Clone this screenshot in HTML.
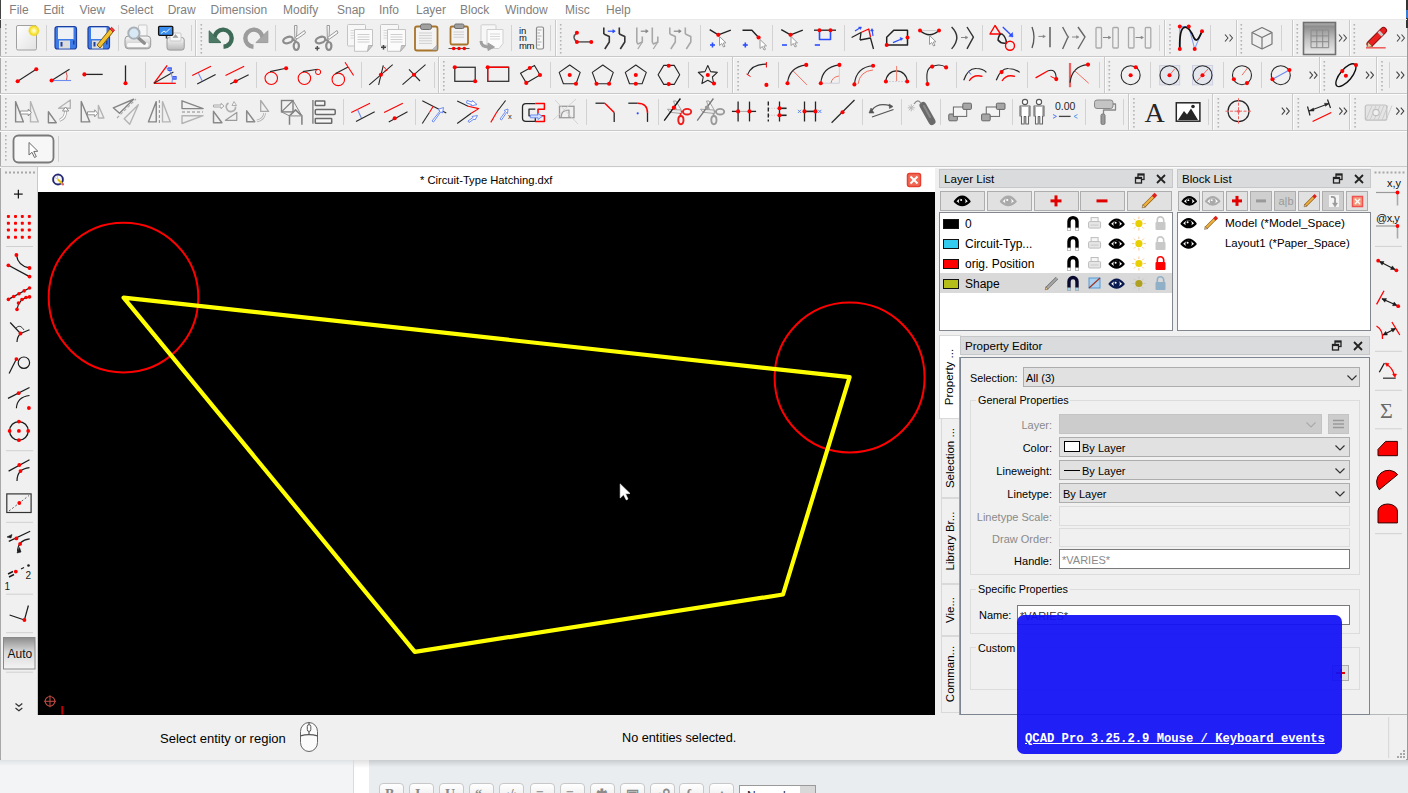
<!DOCTYPE html><html><head><meta charset="utf-8"><style>
*{box-sizing:border-box;margin:0;padding:0}
html,body{width:1408px;height:793px;overflow:hidden;background:#e9edf0;font-family:"Liberation Sans",sans-serif;position:relative}
.a{position:absolute}
.t{position:absolute;white-space:nowrap;line-height:1}
svg{position:absolute;overflow:visible}
</style></head><body>

<div class="a" style="left:0px;top:760px;width:353px;height:33px;background:linear-gradient(#dfe2e5,#f2f4f6 6px)"></div>
<div class="a" style="left:353px;top:760px;width:1px;height:33px;background:#d9dcdf"></div>
<div class="a" style="left:354px;top:760px;width:15px;height:33px;background:linear-gradient(#e0e0e0,#ffffff 8px)"></div>
<div class="a" style="left:369px;top:760px;width:1039px;height:33px;background:linear-gradient(#c9cccf,#e9edf0 7px)"></div>
<div class="a" style="left:379px;top:783px;width:25px;height:14px;background:linear-gradient(#fff,#f0f0f0);border:1px solid #c8c8c8;border-radius:4px"></div>
<div class="t" style="left:385px;top:788px;font-size:14px;color:#8a8a8a;font-family:'Liberation Serif',serif;font-weight:bold">B</div>
<div class="a" style="left:409px;top:783px;width:25px;height:14px;background:linear-gradient(#fff,#f0f0f0);border:1px solid #c8c8c8;border-radius:4px"></div>
<div class="t" style="left:415px;top:788px;font-size:14px;color:#8a8a8a;font-family:'Liberation Serif',serif;font-weight:bold">I</div>
<div class="a" style="left:439px;top:783px;width:25px;height:14px;background:linear-gradient(#fff,#f0f0f0);border:1px solid #c8c8c8;border-radius:4px"></div>
<div class="t" style="left:445px;top:788px;font-size:14px;color:#8a8a8a;font-family:'Liberation Serif',serif;font-weight:bold">U</div>
<div class="a" style="left:469px;top:783px;width:25px;height:14px;background:linear-gradient(#fff,#f0f0f0);border:1px solid #c8c8c8;border-radius:4px"></div>
<div class="t" style="left:475px;top:788px;font-size:14px;color:#8a8a8a;font-family:'Liberation Serif',serif;font-weight:bold">&#8220;</div>
<div class="a" style="left:499px;top:783px;width:25px;height:14px;background:linear-gradient(#fff,#f0f0f0);border:1px solid #c8c8c8;border-radius:4px"></div>
<div class="t" style="left:505px;top:788px;font-size:14px;color:#8a8a8a;font-family:'Liberation Serif',serif;font-weight:bold">&#8249;/&#8250;</div>
<div class="a" style="left:530px;top:783px;width:25px;height:14px;background:linear-gradient(#fff,#f0f0f0);border:1px solid #c8c8c8;border-radius:4px"></div>
<div class="t" style="left:536px;top:788px;font-size:14px;color:#8a8a8a;font-family:'Liberation Serif',serif;font-weight:bold">&#8801;</div>
<div class="a" style="left:560px;top:783px;width:25px;height:14px;background:linear-gradient(#fff,#f0f0f0);border:1px solid #c8c8c8;border-radius:4px"></div>
<div class="t" style="left:566px;top:788px;font-size:14px;color:#8a8a8a;font-family:'Liberation Serif',serif;font-weight:bold">&#8801;</div>
<div class="a" style="left:590px;top:783px;width:25px;height:14px;background:linear-gradient(#fff,#f0f0f0);border:1px solid #c8c8c8;border-radius:4px"></div>
<div class="t" style="left:596px;top:788px;font-size:14px;color:#8a8a8a;font-family:'Liberation Serif',serif;font-weight:bold">&#10033;</div>
<div class="a" style="left:620px;top:783px;width:25px;height:14px;background:linear-gradient(#fff,#f0f0f0);border:1px solid #c8c8c8;border-radius:4px"></div>
<div class="t" style="left:626px;top:788px;font-size:14px;color:#8a8a8a;font-family:'Liberation Serif',serif;font-weight:bold">&#9635;</div>
<div class="a" style="left:650px;top:783px;width:25px;height:14px;background:linear-gradient(#fff,#f0f0f0);border:1px solid #c8c8c8;border-radius:4px"></div>
<div class="t" style="left:656px;top:788px;font-size:14px;color:#8a8a8a;font-family:'Liberation Serif',serif;font-weight:bold">&#9741;</div>
<div class="a" style="left:679px;top:783px;width:25px;height:14px;background:linear-gradient(#fff,#f0f0f0);border:1px solid #c8c8c8;border-radius:4px"></div>
<div class="t" style="left:685px;top:788px;font-size:14px;color:#8a8a8a;font-family:'Liberation Serif',serif;font-weight:bold">&#402;</div>
<div class="a" style="left:709px;top:783px;width:25px;height:14px;background:linear-gradient(#fff,#f0f0f0);border:1px solid #c8c8c8;border-radius:4px"></div>
<div class="t" style="left:715px;top:788px;font-size:14px;color:#8a8a8a;font-family:'Liberation Serif',serif;font-weight:bold">&#9650;</div>
<div class="a" style="left:739px;top:785px;width:77px;height:14px;background:#fff;border:1px solid #9a9a9a"></div>
<div class="a" style="left:800px;top:786px;width:15px;height:13px;background:#d8d8d8"></div>
<div class="t" style="left:747px;top:790px;font-size:12px;color:#222;">Normal</div>
<div class="a" style="left:545px;top:759px;width:335px;height:1px;background:#8a8a8a"></div>
<div class="a" style="left:0px;top:0px;width:1408px;height:760px;background:#f0f0f0;border-right:1px solid #9a9a9a;border-bottom:1px solid #9a9a9a;border-left:1px solid #a8a8a8"></div>
<div class="a" style="left:0px;top:0px;width:1406px;height:20px;background:#fff"></div>
<div class="a" style="left:1406px;top:0px;width:2px;height:28px;background:#333"></div>
<div class="a" style="left:0px;top:0px;width:1px;height:28px;background:#444"></div>
<div class="a" style="left:1406px;top:10px;width:2px;height:8px;background:#3a7ad0"></div>
<div class="a" style="left:0px;top:19px;width:1407px;height:1px;background:#e8e8e8"></div>
<div class="t" style="left:9.3px;top:4px;font-size:12px;color:#808080;">File</div>
<div class="t" style="left:43.4px;top:4px;font-size:12px;color:#808080;">Edit</div>
<div class="t" style="left:79.4px;top:4px;font-size:12px;color:#808080;">View</div>
<div class="t" style="left:120px;top:4px;font-size:12px;color:#808080;">Select</div>
<div class="t" style="left:167.7px;top:4px;font-size:12px;color:#808080;">Draw</div>
<div class="t" style="left:210.5px;top:4px;font-size:12px;color:#808080;">Dimension</div>
<div class="t" style="left:283px;top:4px;font-size:12px;color:#808080;">Modify</div>
<div class="t" style="left:337px;top:4px;font-size:12px;color:#808080;">Snap</div>
<div class="t" style="left:379px;top:4px;font-size:12px;color:#808080;">Info</div>
<div class="t" style="left:416px;top:4px;font-size:12px;color:#808080;">Layer</div>
<div class="t" style="left:460px;top:4px;font-size:12px;color:#808080;">Block</div>
<div class="t" style="left:505px;top:4px;font-size:12px;color:#808080;">Window</div>
<div class="t" style="left:565px;top:4px;font-size:12px;color:#808080;">Misc</div>
<div class="t" style="left:606px;top:4px;font-size:12px;color:#808080;">Help</div>
<div class="a" style="left:0px;top:56px;width:1407px;height:1px;background:#c9c9c9"></div>
<div class="a" style="left:0px;top:57px;width:1407px;height:1px;background:#fbfbfb"></div>
<div class="a" style="left:0px;top:93px;width:1407px;height:1px;background:#c9c9c9"></div>
<div class="a" style="left:0px;top:94px;width:1407px;height:1px;background:#fbfbfb"></div>
<div class="a" style="left:0px;top:130px;width:1407px;height:1px;background:#c9c9c9"></div>
<div class="a" style="left:0px;top:131px;width:1407px;height:1px;background:#fbfbfb"></div>
<div class="a" style="left:0px;top:166px;width:1407px;height:1px;background:#c9c9c9"></div>
<div class="a" style="left:0px;top:167px;width:1407px;height:1px;background:#fbfbfb"></div>
<svg style="left:0;top:0" width="1408" height="793">
<defs>
<linearGradient id="gpage" x1="0" y1="0" x2="1" y2="1"><stop offset="0" stop-color="#ffffff"/><stop offset="1" stop-color="#e2e2e2"/></linearGradient>
<linearGradient id="gprint" x1="0" y1="0" x2="0" y2="1"><stop offset="0" stop-color="#fafafa"/><stop offset="1" stop-color="#b9b9b9"/></linearGradient>
<linearGradient id="ggrid" x1="0" y1="0" x2="0" y2="1"><stop offset="0" stop-color="#b8b8b8"/><stop offset="0.12" stop-color="#8e8e8e"/><stop offset="0.55" stop-color="#c4c4c4"/><stop offset="1" stop-color="#ececec"/></linearGradient>
<radialGradient id="gglow"><stop offset="0" stop-color="#ffffff"/><stop offset="0.35" stop-color="#fff27a"/><stop offset="0.75" stop-color="#f0d820"/><stop offset="1" stop-color="#f0d820" stop-opacity="0"/></radialGradient>
</defs>
<rect x="5.0" y="24" width="1.6" height="1.6" fill="#b4b4b4"/>
<rect x="5.0" y="28" width="1.6" height="1.6" fill="#b4b4b4"/>
<rect x="5.0" y="32" width="1.6" height="1.6" fill="#b4b4b4"/>
<rect x="5.0" y="36" width="1.6" height="1.6" fill="#b4b4b4"/>
<rect x="5.0" y="40" width="1.6" height="1.6" fill="#b4b4b4"/>
<rect x="5.0" y="44" width="1.6" height="1.6" fill="#b4b4b4"/>
<rect x="5.0" y="48" width="1.6" height="1.6" fill="#b4b4b4"/>
<rect x="5.0" y="52" width="1.6" height="1.6" fill="#b4b4b4"/>
<rect x="200.5" y="24" width="1.6" height="1.6" fill="#b4b4b4"/>
<rect x="200.5" y="28" width="1.6" height="1.6" fill="#b4b4b4"/>
<rect x="200.5" y="32" width="1.6" height="1.6" fill="#b4b4b4"/>
<rect x="200.5" y="36" width="1.6" height="1.6" fill="#b4b4b4"/>
<rect x="200.5" y="40" width="1.6" height="1.6" fill="#b4b4b4"/>
<rect x="200.5" y="44" width="1.6" height="1.6" fill="#b4b4b4"/>
<rect x="200.5" y="48" width="1.6" height="1.6" fill="#b4b4b4"/>
<rect x="200.5" y="52" width="1.6" height="1.6" fill="#b4b4b4"/>
<rect x="559.9" y="24" width="1.6" height="1.6" fill="#b4b4b4"/>
<rect x="559.9" y="28" width="1.6" height="1.6" fill="#b4b4b4"/>
<rect x="559.9" y="32" width="1.6" height="1.6" fill="#b4b4b4"/>
<rect x="559.9" y="36" width="1.6" height="1.6" fill="#b4b4b4"/>
<rect x="559.9" y="40" width="1.6" height="1.6" fill="#b4b4b4"/>
<rect x="559.9" y="44" width="1.6" height="1.6" fill="#b4b4b4"/>
<rect x="559.9" y="48" width="1.6" height="1.6" fill="#b4b4b4"/>
<rect x="559.9" y="52" width="1.6" height="1.6" fill="#b4b4b4"/>
<rect x="1169.2" y="24" width="1.6" height="1.6" fill="#b4b4b4"/>
<rect x="1169.2" y="28" width="1.6" height="1.6" fill="#b4b4b4"/>
<rect x="1169.2" y="32" width="1.6" height="1.6" fill="#b4b4b4"/>
<rect x="1169.2" y="36" width="1.6" height="1.6" fill="#b4b4b4"/>
<rect x="1169.2" y="40" width="1.6" height="1.6" fill="#b4b4b4"/>
<rect x="1169.2" y="44" width="1.6" height="1.6" fill="#b4b4b4"/>
<rect x="1169.2" y="48" width="1.6" height="1.6" fill="#b4b4b4"/>
<rect x="1169.2" y="52" width="1.6" height="1.6" fill="#b4b4b4"/>
<rect x="1240.5" y="24" width="1.6" height="1.6" fill="#b4b4b4"/>
<rect x="1240.5" y="28" width="1.6" height="1.6" fill="#b4b4b4"/>
<rect x="1240.5" y="32" width="1.6" height="1.6" fill="#b4b4b4"/>
<rect x="1240.5" y="36" width="1.6" height="1.6" fill="#b4b4b4"/>
<rect x="1240.5" y="40" width="1.6" height="1.6" fill="#b4b4b4"/>
<rect x="1240.5" y="44" width="1.6" height="1.6" fill="#b4b4b4"/>
<rect x="1240.5" y="48" width="1.6" height="1.6" fill="#b4b4b4"/>
<rect x="1240.5" y="52" width="1.6" height="1.6" fill="#b4b4b4"/>
<rect x="1296.5" y="24" width="1.6" height="1.6" fill="#b4b4b4"/>
<rect x="1296.5" y="28" width="1.6" height="1.6" fill="#b4b4b4"/>
<rect x="1296.5" y="32" width="1.6" height="1.6" fill="#b4b4b4"/>
<rect x="1296.5" y="36" width="1.6" height="1.6" fill="#b4b4b4"/>
<rect x="1296.5" y="40" width="1.6" height="1.6" fill="#b4b4b4"/>
<rect x="1296.5" y="44" width="1.6" height="1.6" fill="#b4b4b4"/>
<rect x="1296.5" y="48" width="1.6" height="1.6" fill="#b4b4b4"/>
<rect x="1296.5" y="52" width="1.6" height="1.6" fill="#b4b4b4"/>
<rect x="1353.5" y="24" width="1.6" height="1.6" fill="#b4b4b4"/>
<rect x="1353.5" y="28" width="1.6" height="1.6" fill="#b4b4b4"/>
<rect x="1353.5" y="32" width="1.6" height="1.6" fill="#b4b4b4"/>
<rect x="1353.5" y="36" width="1.6" height="1.6" fill="#b4b4b4"/>
<rect x="1353.5" y="40" width="1.6" height="1.6" fill="#b4b4b4"/>
<rect x="1353.5" y="44" width="1.6" height="1.6" fill="#b4b4b4"/>
<rect x="1353.5" y="48" width="1.6" height="1.6" fill="#b4b4b4"/>
<rect x="1353.5" y="52" width="1.6" height="1.6" fill="#b4b4b4"/>
<rect x="5.0" y="61" width="1.6" height="1.6" fill="#b4b4b4"/>
<rect x="5.0" y="65" width="1.6" height="1.6" fill="#b4b4b4"/>
<rect x="5.0" y="69" width="1.6" height="1.6" fill="#b4b4b4"/>
<rect x="5.0" y="73" width="1.6" height="1.6" fill="#b4b4b4"/>
<rect x="5.0" y="77" width="1.6" height="1.6" fill="#b4b4b4"/>
<rect x="5.0" y="81" width="1.6" height="1.6" fill="#b4b4b4"/>
<rect x="5.0" y="85" width="1.6" height="1.6" fill="#b4b4b4"/>
<rect x="5.0" y="89" width="1.6" height="1.6" fill="#b4b4b4"/>
<rect x="443.0" y="61" width="1.6" height="1.6" fill="#b4b4b4"/>
<rect x="443.0" y="65" width="1.6" height="1.6" fill="#b4b4b4"/>
<rect x="443.0" y="69" width="1.6" height="1.6" fill="#b4b4b4"/>
<rect x="443.0" y="73" width="1.6" height="1.6" fill="#b4b4b4"/>
<rect x="443.0" y="77" width="1.6" height="1.6" fill="#b4b4b4"/>
<rect x="443.0" y="81" width="1.6" height="1.6" fill="#b4b4b4"/>
<rect x="443.0" y="85" width="1.6" height="1.6" fill="#b4b4b4"/>
<rect x="443.0" y="89" width="1.6" height="1.6" fill="#b4b4b4"/>
<rect x="737.3" y="61" width="1.6" height="1.6" fill="#b4b4b4"/>
<rect x="737.3" y="65" width="1.6" height="1.6" fill="#b4b4b4"/>
<rect x="737.3" y="69" width="1.6" height="1.6" fill="#b4b4b4"/>
<rect x="737.3" y="73" width="1.6" height="1.6" fill="#b4b4b4"/>
<rect x="737.3" y="77" width="1.6" height="1.6" fill="#b4b4b4"/>
<rect x="737.3" y="81" width="1.6" height="1.6" fill="#b4b4b4"/>
<rect x="737.3" y="85" width="1.6" height="1.6" fill="#b4b4b4"/>
<rect x="737.3" y="89" width="1.6" height="1.6" fill="#b4b4b4"/>
<rect x="1108.5" y="61" width="1.6" height="1.6" fill="#b4b4b4"/>
<rect x="1108.5" y="65" width="1.6" height="1.6" fill="#b4b4b4"/>
<rect x="1108.5" y="69" width="1.6" height="1.6" fill="#b4b4b4"/>
<rect x="1108.5" y="73" width="1.6" height="1.6" fill="#b4b4b4"/>
<rect x="1108.5" y="77" width="1.6" height="1.6" fill="#b4b4b4"/>
<rect x="1108.5" y="81" width="1.6" height="1.6" fill="#b4b4b4"/>
<rect x="1108.5" y="85" width="1.6" height="1.6" fill="#b4b4b4"/>
<rect x="1108.5" y="89" width="1.6" height="1.6" fill="#b4b4b4"/>
<rect x="1323.5" y="61" width="1.6" height="1.6" fill="#b4b4b4"/>
<rect x="1323.5" y="65" width="1.6" height="1.6" fill="#b4b4b4"/>
<rect x="1323.5" y="69" width="1.6" height="1.6" fill="#b4b4b4"/>
<rect x="1323.5" y="73" width="1.6" height="1.6" fill="#b4b4b4"/>
<rect x="1323.5" y="77" width="1.6" height="1.6" fill="#b4b4b4"/>
<rect x="1323.5" y="81" width="1.6" height="1.6" fill="#b4b4b4"/>
<rect x="1323.5" y="85" width="1.6" height="1.6" fill="#b4b4b4"/>
<rect x="1323.5" y="89" width="1.6" height="1.6" fill="#b4b4b4"/>
<rect x="1381.2" y="61" width="1.6" height="1.6" fill="#b4b4b4"/>
<rect x="1381.2" y="65" width="1.6" height="1.6" fill="#b4b4b4"/>
<rect x="1381.2" y="69" width="1.6" height="1.6" fill="#b4b4b4"/>
<rect x="1381.2" y="73" width="1.6" height="1.6" fill="#b4b4b4"/>
<rect x="1381.2" y="77" width="1.6" height="1.6" fill="#b4b4b4"/>
<rect x="1381.2" y="81" width="1.6" height="1.6" fill="#b4b4b4"/>
<rect x="1381.2" y="85" width="1.6" height="1.6" fill="#b4b4b4"/>
<rect x="1381.2" y="89" width="1.6" height="1.6" fill="#b4b4b4"/>
<rect x="5.0" y="98" width="1.6" height="1.6" fill="#b4b4b4"/>
<rect x="5.0" y="102" width="1.6" height="1.6" fill="#b4b4b4"/>
<rect x="5.0" y="106" width="1.6" height="1.6" fill="#b4b4b4"/>
<rect x="5.0" y="110" width="1.6" height="1.6" fill="#b4b4b4"/>
<rect x="5.0" y="114" width="1.6" height="1.6" fill="#b4b4b4"/>
<rect x="5.0" y="118" width="1.6" height="1.6" fill="#b4b4b4"/>
<rect x="5.0" y="122" width="1.6" height="1.6" fill="#b4b4b4"/>
<rect x="5.0" y="126" width="1.6" height="1.6" fill="#b4b4b4"/>
<rect x="1133.1" y="98" width="1.6" height="1.6" fill="#b4b4b4"/>
<rect x="1133.1" y="102" width="1.6" height="1.6" fill="#b4b4b4"/>
<rect x="1133.1" y="106" width="1.6" height="1.6" fill="#b4b4b4"/>
<rect x="1133.1" y="110" width="1.6" height="1.6" fill="#b4b4b4"/>
<rect x="1133.1" y="114" width="1.6" height="1.6" fill="#b4b4b4"/>
<rect x="1133.1" y="118" width="1.6" height="1.6" fill="#b4b4b4"/>
<rect x="1133.1" y="122" width="1.6" height="1.6" fill="#b4b4b4"/>
<rect x="1133.1" y="126" width="1.6" height="1.6" fill="#b4b4b4"/>
<rect x="1217.5" y="98" width="1.6" height="1.6" fill="#b4b4b4"/>
<rect x="1217.5" y="102" width="1.6" height="1.6" fill="#b4b4b4"/>
<rect x="1217.5" y="106" width="1.6" height="1.6" fill="#b4b4b4"/>
<rect x="1217.5" y="110" width="1.6" height="1.6" fill="#b4b4b4"/>
<rect x="1217.5" y="114" width="1.6" height="1.6" fill="#b4b4b4"/>
<rect x="1217.5" y="118" width="1.6" height="1.6" fill="#b4b4b4"/>
<rect x="1217.5" y="122" width="1.6" height="1.6" fill="#b4b4b4"/>
<rect x="1217.5" y="126" width="1.6" height="1.6" fill="#b4b4b4"/>
<rect x="1297.5" y="98" width="1.6" height="1.6" fill="#b4b4b4"/>
<rect x="1297.5" y="102" width="1.6" height="1.6" fill="#b4b4b4"/>
<rect x="1297.5" y="106" width="1.6" height="1.6" fill="#b4b4b4"/>
<rect x="1297.5" y="110" width="1.6" height="1.6" fill="#b4b4b4"/>
<rect x="1297.5" y="114" width="1.6" height="1.6" fill="#b4b4b4"/>
<rect x="1297.5" y="118" width="1.6" height="1.6" fill="#b4b4b4"/>
<rect x="1297.5" y="122" width="1.6" height="1.6" fill="#b4b4b4"/>
<rect x="1297.5" y="126" width="1.6" height="1.6" fill="#b4b4b4"/>
<rect x="1354.3" y="98" width="1.6" height="1.6" fill="#b4b4b4"/>
<rect x="1354.3" y="102" width="1.6" height="1.6" fill="#b4b4b4"/>
<rect x="1354.3" y="106" width="1.6" height="1.6" fill="#b4b4b4"/>
<rect x="1354.3" y="110" width="1.6" height="1.6" fill="#b4b4b4"/>
<rect x="1354.3" y="114" width="1.6" height="1.6" fill="#b4b4b4"/>
<rect x="1354.3" y="118" width="1.6" height="1.6" fill="#b4b4b4"/>
<rect x="1354.3" y="122" width="1.6" height="1.6" fill="#b4b4b4"/>
<rect x="1354.3" y="126" width="1.6" height="1.6" fill="#b4b4b4"/>
<rect x="5.0" y="135" width="1.6" height="1.6" fill="#b4b4b4"/>
<rect x="5.0" y="139" width="1.6" height="1.6" fill="#b4b4b4"/>
<rect x="5.0" y="143" width="1.6" height="1.6" fill="#b4b4b4"/>
<rect x="5.0" y="147" width="1.6" height="1.6" fill="#b4b4b4"/>
<rect x="5.0" y="151" width="1.6" height="1.6" fill="#b4b4b4"/>
<rect x="5.0" y="155" width="1.6" height="1.6" fill="#b4b4b4"/>
<rect x="5.0" y="159" width="1.6" height="1.6" fill="#b4b4b4"/>
<rect x="195" y="20" width="1" height="36" fill="#c9c9c9"/><rect x="196" y="20" width="1" height="36" fill="#fbfbfb"/>
<rect x="555" y="20" width="1" height="36" fill="#c9c9c9"/><rect x="556" y="20" width="1" height="36" fill="#fbfbfb"/>
<rect x="1164" y="20" width="1" height="36" fill="#c9c9c9"/><rect x="1165" y="20" width="1" height="36" fill="#fbfbfb"/>
<rect x="1236" y="20" width="1" height="36" fill="#c9c9c9"/><rect x="1237" y="20" width="1" height="36" fill="#fbfbfb"/>
<rect x="1292" y="20" width="1" height="36" fill="#c9c9c9"/><rect x="1293" y="20" width="1" height="36" fill="#fbfbfb"/>
<rect x="1349" y="20" width="1" height="36" fill="#c9c9c9"/><rect x="1350" y="20" width="1" height="36" fill="#fbfbfb"/>
<rect x="438" y="57" width="1" height="36" fill="#c9c9c9"/><rect x="439" y="57" width="1" height="36" fill="#fbfbfb"/>
<rect x="732" y="57" width="1" height="36" fill="#c9c9c9"/><rect x="733" y="57" width="1" height="36" fill="#fbfbfb"/>
<rect x="1104" y="57" width="1" height="36" fill="#c9c9c9"/><rect x="1105" y="57" width="1" height="36" fill="#fbfbfb"/>
<rect x="1319" y="57" width="1" height="36" fill="#c9c9c9"/><rect x="1320" y="57" width="1" height="36" fill="#fbfbfb"/>
<rect x="1376" y="57" width="1" height="36" fill="#c9c9c9"/><rect x="1377" y="57" width="1" height="36" fill="#fbfbfb"/>
<rect x="1128" y="94" width="1" height="36" fill="#c9c9c9"/><rect x="1129" y="94" width="1" height="36" fill="#fbfbfb"/>
<rect x="1212" y="94" width="1" height="36" fill="#c9c9c9"/><rect x="1213" y="94" width="1" height="36" fill="#fbfbfb"/>
<rect x="1292" y="94" width="1" height="36" fill="#c9c9c9"/><rect x="1293" y="94" width="1" height="36" fill="#fbfbfb"/>
<rect x="1349" y="94" width="1" height="36" fill="#c9c9c9"/><rect x="1350" y="94" width="1" height="36" fill="#fbfbfb"/>
<rect x="46" y="25" width="1" height="26" fill="#d2d2d2"/>
<rect x="118" y="25" width="1" height="26" fill="#d2d2d2"/>
<rect x="191" y="25" width="1" height="26" fill="#d2d2d2"/>
<rect x="275" y="25" width="1" height="26" fill="#d2d2d2"/>
<rect x="511" y="25" width="1" height="26" fill="#d2d2d2"/>
<rect x="550" y="25" width="1" height="26" fill="#d2d2d2"/>
<rect x="700" y="25" width="1" height="26" fill="#d2d2d2"/>
<rect x="772" y="25" width="1" height="26" fill="#d2d2d2"/>
<rect x="844" y="25" width="1" height="26" fill="#d2d2d2"/>
<rect x="982" y="25" width="1" height="26" fill="#d2d2d2"/>
<rect x="1021" y="25" width="1" height="26" fill="#d2d2d2"/>
<rect x="1159" y="25" width="1" height="26" fill="#d2d2d2"/>
<rect x="1210" y="25" width="1" height="26" fill="#d2d2d2"/>
<rect x="1281" y="25" width="1" height="26" fill="#d2d2d2"/>
<rect x="145" y="62" width="1" height="26" fill="#d2d2d2"/>
<rect x="185" y="62" width="1" height="26" fill="#d2d2d2"/>
<rect x="256" y="62" width="1" height="26" fill="#d2d2d2"/>
<rect x="361" y="62" width="1" height="26" fill="#d2d2d2"/>
<rect x="434" y="62" width="1" height="26" fill="#d2d2d2"/>
<rect x="550" y="62" width="1" height="26" fill="#d2d2d2"/>
<rect x="688" y="62" width="1" height="26" fill="#d2d2d2"/>
<rect x="727" y="62" width="1" height="26" fill="#d2d2d2"/>
<rect x="778" y="62" width="1" height="26" fill="#d2d2d2"/>
<rect x="916" y="62" width="1" height="26" fill="#d2d2d2"/>
<rect x="956" y="62" width="1" height="26" fill="#d2d2d2"/>
<rect x="1027" y="62" width="1" height="26" fill="#d2d2d2"/>
<rect x="1099" y="62" width="1" height="26" fill="#d2d2d2"/>
<rect x="1150" y="62" width="1" height="26" fill="#d2d2d2"/>
<rect x="1223" y="62" width="1" height="26" fill="#d2d2d2"/>
<rect x="1261" y="62" width="1" height="26" fill="#d2d2d2"/>
<rect x="1389" y="62" width="1" height="26" fill="#d2d2d2"/>
<rect x="343" y="99" width="1" height="26" fill="#d2d2d2"/>
<rect x="415" y="99" width="1" height="26" fill="#d2d2d2"/>
<rect x="586" y="99" width="1" height="26" fill="#d2d2d2"/>
<rect x="658" y="99" width="1" height="26" fill="#d2d2d2"/>
<rect x="862" y="99" width="1" height="26" fill="#d2d2d2"/>
<rect x="901" y="99" width="1" height="26" fill="#d2d2d2"/>
<rect x="940" y="99" width="1" height="26" fill="#d2d2d2"/>
<rect x="1012" y="99" width="1" height="26" fill="#d2d2d2"/>
<rect x="1085" y="99" width="1" height="26" fill="#d2d2d2"/>
<rect x="1123" y="99" width="1" height="26" fill="#d2d2d2"/>
<rect x="1208" y="99" width="1" height="26" fill="#d2d2d2"/>
<rect x="58" y="136" width="1" height="26" fill="#d2d2d2"/>
<rect x="16.5" y="25.5" width="20" height="24.5" rx="1.5" fill="url(#gpage)" stroke="#a0a0a0" stroke-width="1" />
<circle cx="33.9" cy="30.7" r="6" fill="url(#gglow)"/>
<rect x="55.0" y="26.5" width="21.5" height="22.5" rx="2.5" fill="#3d7ce6" stroke="#1f3f9f" stroke-width="1.2" />
<rect x="58.0" y="27.5" width="15.5" height="11.5" rx="0" fill="#eef2f6" stroke="none" stroke-width="0" />
<rect x="59.0" y="40.5" width="11" height="8" rx="0" fill="#dcdcdc" stroke="none" stroke-width="0" />
<rect x="60.5" y="42" width="2" height="4.5" rx="0" fill="#1f3f9f" stroke="none" stroke-width="0" />
<rect x="73.0" y="40.5" width="1.5" height="4" rx="0" fill="#1f3f9f" stroke="none" stroke-width="0" />
<rect x="88.0" y="26.5" width="21.5" height="22.5" rx="2.5" fill="#3d7ce6" stroke="#1f3f9f" stroke-width="1.2" />
<rect x="91.0" y="27.5" width="15.5" height="11.5" rx="0" fill="#eef2f6" stroke="none" stroke-width="0" />
<rect x="92.0" y="40.5" width="11" height="8" rx="0" fill="#dcdcdc" stroke="none" stroke-width="0" />
<rect x="93.5" y="42" width="2" height="4.5" rx="0" fill="#1f3f9f" stroke="none" stroke-width="0" />
<rect x="106.0" y="40.5" width="1.5" height="4" rx="0" fill="#1f3f9f" stroke="none" stroke-width="0" />
<path d="M97 45 L110 29 L113 32 L100 48 Z" fill="#f2c230" stroke="#7a5a10" stroke-width="1" stroke-linejoin="round" />
<path d="M110 29 L111.5 27.3 L114.5 30 L113 32 Z" fill="#e84040" stroke="#d02020" stroke-width="1" stroke-linejoin="round" />
<rect x="138.5" y="25" width="8.5" height="12" rx="1" fill="#f6f6f6" stroke="#c8c8c8" stroke-width="1" />
<rect x="125" y="36" width="25.7" height="12.8" rx="3.5" fill="url(#gprint)" stroke="#9a9a9a" stroke-width="1" />
<rect x="127" y="43" width="21.5" height="4" rx="1.5" fill="#f8f8f8" stroke="none" stroke-width="0" />
<line x1="137.8" y1="37.5" x2="144.4" y2="43.3" stroke="#8e8e8e" stroke-width="3.2" stroke-linecap="round"/>
<circle cx="133.9" cy="33.2" r="5.6" fill="#d8e8f4" stroke="#a8b0b8" stroke-width="2"/>
<rect x="167" y="37.5" width="17.2" height="12.6" rx="2.5" fill="url(#gprint)" stroke="#9a9a9a" stroke-width="1" />
<rect x="170" y="33" width="11" height="8" rx="1" fill="#f8f8f8" stroke="#c8c8c8" stroke-width="1" />
<polygon points="175.5,34.5 173,37.5 178,37.5" fill="#a0a0a0" stroke="#999" stroke-width="0.5" stroke-linejoin="round" />
<line x1="166.5" y1="35.3" x2="166.5" y2="38.5" stroke="#333" stroke-width="1.5" />
<rect x="158.6" y="26.3" width="14.2" height="9" rx="1" fill="#3a8ef0" stroke="#111" stroke-width="1.3" />
<polyline points="161,33.5 164,31 166,32.5 170,28.5" fill="none" stroke="#fff" stroke-width="0.9" stroke-linejoin="round" />
<path d="M214.5 37.5 A 8.6 8.6 0 1 1 223.5 46.8" fill="none" stroke="#3e6a58" stroke-width="4.4" stroke-linejoin="round" />
<polygon points="209.2,30.8 209.2,42.6 221,42.6" fill="#4d7a66" stroke="#3e6a58" stroke-width="1" stroke-linejoin="round" />
<path d="M262.5 37.5 A 8.6 8.6 0 1 0 253.5 46.8" fill="none" stroke="#9c9c9c" stroke-width="4.4" stroke-linejoin="round" />
<polygon points="267.8,30.8 267.8,42.6 256,42.6" fill="#a8a8a8" stroke="#9c9c9c" stroke-width="1" stroke-linejoin="round" />
<polygon points="294.5,25.5 297,25.5 296.5,39 295,43" fill="#fafafa" stroke="#9a9a9a" stroke-width="1" stroke-linejoin="round" />
<polygon points="304.5,30.5 305.5,33 297,39 295,37.5" fill="#fafafa" stroke="#9a9a9a" stroke-width="1" stroke-linejoin="round" />
<ellipse cx="288" cy="40" rx="5" ry="3" transform="rotate(-20 288 40)" fill="none" stroke="#8c8c8c" stroke-width="2.2"/>
<ellipse cx="296.3" cy="46" rx="2.6" ry="4" fill="none" stroke="#8c8c8c" stroke-width="2.2"/>
<line x1="292" y1="39.2" x2="296" y2="41.5" stroke="#8c8c8c" stroke-width="2" />
<polygon points="327.0,25.5 329.5,25.5 329.0,39 327.5,43" fill="#fafafa" stroke="#9a9a9a" stroke-width="1" stroke-linejoin="round" />
<polygon points="337.0,30.5 338.0,33 329.5,39 327.5,37.5" fill="#fafafa" stroke="#9a9a9a" stroke-width="1" stroke-linejoin="round" />
<ellipse cx="320.5" cy="40" rx="5" ry="3" transform="rotate(-20 320.5 40)" fill="none" stroke="#8c8c8c" stroke-width="2.2"/>
<ellipse cx="328.8" cy="46" rx="2.6" ry="4" fill="none" stroke="#8c8c8c" stroke-width="2.2"/>
<line x1="324.5" y1="39.2" x2="328.5" y2="41.5" stroke="#8c8c8c" stroke-width="2" />
<line x1="315.0" y1="48.3" x2="319.5" y2="48.3" stroke="#555" stroke-width="1.5" />
<line x1="317.3" y1="46" x2="317.3" y2="50.6" stroke="#555" stroke-width="1.5" />
<rect x="347.5" y="24.5" width="18" height="21.5" rx="1" fill="#f7f7f7" stroke="#c4c4c4" stroke-width="1" />
<line x1="350.5" y1="30.5" x2="358.5" y2="30.5" stroke="#d8d8d8" stroke-width="1" />
<line x1="350.5" y1="33.0" x2="358.5" y2="33.0" stroke="#d8d8d8" stroke-width="1" />
<line x1="350.5" y1="35.5" x2="358.5" y2="35.5" stroke="#d8d8d8" stroke-width="1" />
<line x1="350.5" y1="38.0" x2="358.5" y2="38.0" stroke="#d8d8d8" stroke-width="1" />
<path d="M354.5 29.5 h18 v16 l-5 5.8 h-13 z" fill="#fbfbfb" stroke="#c4c4c4" stroke-width="1" stroke-linejoin="round" />
<line x1="357.5" y1="34.5" x2="369.5" y2="34.5" stroke="#cfcfcf" stroke-width="1" />
<line x1="357.5" y1="37.0" x2="369.5" y2="37.0" stroke="#cfcfcf" stroke-width="1" />
<line x1="357.5" y1="39.5" x2="369.5" y2="39.5" stroke="#cfcfcf" stroke-width="1" />
<line x1="357.5" y1="42.0" x2="369.5" y2="42.0" stroke="#cfcfcf" stroke-width="1" />
<path d="M367.5 51.3 l5 -5.8 h-4 z" fill="#c8c8c8" stroke="#aaa" stroke-width="0.8" stroke-linejoin="round" />
<rect x="380.5" y="24.5" width="18" height="21.5" rx="1" fill="#f7f7f7" stroke="#c4c4c4" stroke-width="1" />
<line x1="383.5" y1="30.5" x2="391.5" y2="30.5" stroke="#d8d8d8" stroke-width="1" />
<line x1="383.5" y1="33.0" x2="391.5" y2="33.0" stroke="#d8d8d8" stroke-width="1" />
<line x1="383.5" y1="35.5" x2="391.5" y2="35.5" stroke="#d8d8d8" stroke-width="1" />
<line x1="383.5" y1="38.0" x2="391.5" y2="38.0" stroke="#d8d8d8" stroke-width="1" />
<path d="M387.5 29.5 h18 v16 l-5 5.8 h-13 z" fill="#fbfbfb" stroke="#c4c4c4" stroke-width="1" stroke-linejoin="round" />
<line x1="390.5" y1="34.5" x2="402.5" y2="34.5" stroke="#cfcfcf" stroke-width="1" />
<line x1="390.5" y1="37.0" x2="402.5" y2="37.0" stroke="#cfcfcf" stroke-width="1" />
<line x1="390.5" y1="39.5" x2="402.5" y2="39.5" stroke="#cfcfcf" stroke-width="1" />
<line x1="390.5" y1="42.0" x2="402.5" y2="42.0" stroke="#cfcfcf" stroke-width="1" />
<path d="M400.5 51.3 l5 -5.8 h-4 z" fill="#c8c8c8" stroke="#aaa" stroke-width="0.8" stroke-linejoin="round" />
<line x1="381" y1="47.3" x2="386" y2="47.3" stroke="#444" stroke-width="1.5" />
<line x1="383.5" y1="45" x2="383.5" y2="49.6" stroke="#444" stroke-width="1.5" />
<rect x="415" y="26.5" width="22.5" height="24" rx="2" fill="#f3f3f3" stroke="#a8742a" stroke-width="1.8" />
<line x1="419" y1="33.0" x2="432" y2="33.0" stroke="#cfcfcf" stroke-width="1" />
<line x1="419" y1="35.6" x2="432" y2="35.6" stroke="#cfcfcf" stroke-width="1" />
<line x1="419" y1="38.2" x2="432" y2="38.2" stroke="#cfcfcf" stroke-width="1" />
<line x1="419" y1="40.8" x2="432" y2="40.8" stroke="#cfcfcf" stroke-width="1" />
<line x1="419" y1="43.4" x2="432" y2="43.4" stroke="#cfcfcf" stroke-width="1" />
<rect x="420.5" y="24" width="11" height="5.5" rx="2" fill="#a0a0a0" stroke="#6e6e6e" stroke-width="1" />
<path d="M432 50 l5 -5 v5 z" fill="#bbb" stroke="#999" stroke-width="0.5" stroke-linejoin="round" />
<rect x="450.5" y="26.5" width="17.5" height="18" rx="1.5" fill="#f3f3f3" stroke="#a8742a" stroke-width="1.8" />
<line x1="453.5" y1="32.0" x2="464" y2="32.0" stroke="#cfcfcf" stroke-width="1" />
<line x1="453.5" y1="34.6" x2="464" y2="34.6" stroke="#cfcfcf" stroke-width="1" />
<line x1="453.5" y1="37.2" x2="464" y2="37.2" stroke="#cfcfcf" stroke-width="1" />
<rect x="454.5" y="24" width="9.5" height="4.5" rx="1.5" fill="#a0a0a0" stroke="#6e6e6e" stroke-width="1" />
<line x1="448.5" y1="48.5" x2="469.5" y2="48.5" stroke="#555" stroke-width="1" />
<circle cx="453.7" cy="48.5" r="1.8" fill="#ff0000"/>
<circle cx="459" cy="48.5" r="1.8" fill="#ff0000"/>
<circle cx="464.3" cy="48.5" r="1.8" fill="#ff0000"/>
<rect x="481" y="24.8" width="15" height="20" rx="1" fill="#f7f7f7" stroke="#cfcfcf" stroke-width="1" />
<path d="M487 29.5 h16 v14 l-4 5 h-12 z" fill="#fbfbfb" stroke="#cfcfcf" stroke-width="1" stroke-linejoin="round" />
<line x1="490" y1="34.0" x2="500" y2="34.0" stroke="#d8d8d8" stroke-width="1" />
<line x1="490" y1="36.5" x2="500" y2="36.5" stroke="#d8d8d8" stroke-width="1" />
<line x1="490" y1="39.0" x2="500" y2="39.0" stroke="#d8d8d8" stroke-width="1" />
<path d="M481 41 q0 6 8 6" fill="none" stroke="#a0a0a0" stroke-width="3" stroke-linejoin="round" />
<polygon points="488,43 494.5,47 488,50.5" fill="#a0a0a0" stroke="#a0a0a0" stroke-width="1" stroke-linejoin="round" />
<text x="519" y="33.5" font-family="Liberation Sans" font-size="9.5" fill="#111" >in</text>
<text x="519" y="41.3" font-family="Liberation Sans" font-size="9.5" fill="#111" >m</text>
<text x="519" y="49.3" font-family="Liberation Sans" font-size="9.5" fill="#111" letter-spacing="-0.4">mm</text>
<rect x="536.5" y="27" width="7" height="22" rx="1.5" fill="#f8f8f8" stroke="#8a8a8a" stroke-width="1.2" />
<line x1="537.5" y1="30" x2="541.5" y2="30" stroke="#999" stroke-width="0.8" />
<line x1="537.5" y1="33" x2="540" y2="33" stroke="#999" stroke-width="0.8" />
<line x1="537.5" y1="36" x2="541.5" y2="36" stroke="#999" stroke-width="0.8" />
<line x1="537.5" y1="39" x2="540" y2="39" stroke="#999" stroke-width="0.8" />
<line x1="537.5" y1="42" x2="541.5" y2="42" stroke="#999" stroke-width="0.8" />
<line x1="537.5" y1="45" x2="540" y2="45" stroke="#999" stroke-width="0.8" />
<path d="M576.9 32.8 Q571 37 576.9 41.9" fill="none" stroke="#555" stroke-width="1.5" stroke-linejoin="round" />
<line x1="576.9" y1="41.9" x2="591.25" y2="41.9" stroke="#555" stroke-width="1.5" />
<circle cx="576.9" cy="32.8" r="2" fill="#ff0000"/>
<circle cx="576.9" cy="41.9" r="2" fill="#ff0000"/>
<circle cx="591.25" cy="41.9" r="2" fill="#ff0000"/>
<line x1="603.8" y1="27.5" x2="603.8" y2="34" stroke="#333" stroke-width="1.6" />
<polyline points="603.8,34 609.3,36.5 609.3,42 604.8,49" fill="none" stroke="#333" stroke-width="1.6" stroke-linejoin="round" />
<line x1="619.3" y1="27.5" x2="619.3" y2="34" stroke="#333" stroke-width="1.6" />
<polyline points="619.3,34 624.8,36.5 624.8,42 620.3,49" fill="none" stroke="#333" stroke-width="1.6" stroke-linejoin="round" />
<line x1="607.8" y1="31.2" x2="614.8" y2="31.2" stroke="#2a4dff" stroke-width="1.2" />
<polygon points="615.3,31.2 612.8,29.5 612.8,33" fill="#2a4dff" stroke="#2a4dff" stroke-width="0.5" stroke-linejoin="round" />
<line x1="636.8" y1="27.5" x2="636.8" y2="34" stroke="#a8a8a8" stroke-width="1.6" />
<polyline points="636.8,34 636.8,42 637.8,44 642.3,42 642.3,36.5" fill="none" stroke="#a8a8a8" stroke-width="1.6" stroke-linejoin="round" />
<line x1="642.3" y1="42" x2="637.8" y2="49" stroke="#a8a8a8" stroke-width="1.3" />
<line x1="652.3" y1="27.5" x2="652.3" y2="34" stroke="#a8a8a8" stroke-width="1.6" />
<polyline points="652.3,34 652.3,42 653.3,44 657.8,42 657.8,36.5" fill="none" stroke="#a8a8a8" stroke-width="1.6" stroke-linejoin="round" />
<line x1="657.8" y1="42" x2="653.3" y2="49" stroke="#a8a8a8" stroke-width="1.3" />
<line x1="640.8" y1="31.2" x2="647.8" y2="31.2" stroke="#888" stroke-width="1.2" />
<polygon points="648.3,31.2 645.8,29.5 645.8,33" fill="#888" stroke="#888" stroke-width="0.5" stroke-linejoin="round" />
<line x1="669.8" y1="27.5" x2="669.8" y2="34" stroke="#a8a8a8" stroke-width="1.6" />
<polyline points="669.8,34 675.3,36.5 675.3,42 670.8,49" fill="none" stroke="#a8a8a8" stroke-width="1.6" stroke-linejoin="round" />
<line x1="685.3" y1="27.5" x2="685.3" y2="34" stroke="#a8a8a8" stroke-width="1.6" />
<polyline points="685.3,34 690.8,36.5 690.8,42 686.3,49" fill="none" stroke="#a8a8a8" stroke-width="1.6" stroke-linejoin="round" />
<line x1="673.8" y1="31.2" x2="680.8" y2="31.2" stroke="#888" stroke-width="1.2" />
<polygon points="681.3,31.2 678.8,29.5 678.8,33" fill="#888" stroke="#888" stroke-width="0.5" stroke-linejoin="round" />
<polyline points="709.7,29.7 718.3,34.8 730.8,30.2" fill="none" stroke="#222" stroke-width="1.4" stroke-linejoin="round" />
<circle cx="718.3" cy="34.8" r="2.1" fill="#ff0000"/>
<line x1="710" y1="45" x2="715" y2="45" stroke="#2a4dff" stroke-width="1.6" />
<line x1="712.5" y1="42.5" x2="712.5" y2="47.5" stroke="#2a4dff" stroke-width="1.6" />
<polygon points="719.5,36.5 719.5,45.5 721.8,43.5 723.5,47.0 725.0,46.3 723.3,43.0 726.0,42.8" fill="#fff" stroke="#9a9a9a" stroke-width="1" stroke-linejoin="round" />
<polyline points="742.5,30.2 751.9,30.2 758.6,37.5" fill="none" stroke="#222" stroke-width="1.4" stroke-linejoin="round" />
<circle cx="758.6" cy="37.5" r="2.1" fill="#ff0000"/>
<line x1="742.8" y1="45" x2="747.8" y2="45" stroke="#2a4dff" stroke-width="1.6" />
<line x1="745.3" y1="42.5" x2="745.3" y2="47.5" stroke="#2a4dff" stroke-width="1.6" />
<polygon points="760,39.5 760,48.5 762.3,46.5 764,50.0 765.5,49.3 763.8,46.0 766.5,45.8" fill="#fff" stroke="#9a9a9a" stroke-width="1" stroke-linejoin="round" />
<polyline points="781.25,29.7 790.6,34.8 802.8,30.2" fill="none" stroke="#222" stroke-width="1.4" stroke-linejoin="round" />
<circle cx="790.6" cy="34.8" r="2.1" fill="#ff0000"/>
<line x1="782" y1="45" x2="787" y2="45" stroke="#2a4dff" stroke-width="1.6" />
<polygon points="791,36.5 791,45.5 793.3,43.5 795,47.0 796.5,46.3 794.8,43.0 797.5,42.8" fill="#fff" stroke="#9a9a9a" stroke-width="1" stroke-linejoin="round" />
<line x1="814" y1="30.2" x2="836" y2="30.2" stroke="#222" stroke-width="1.3" />
<polyline points="819.5,30.2 819.5,39.5 830.5,39.5 830.5,30.2" fill="none" stroke="#2a4dff" stroke-width="1.6" stroke-linejoin="round" />
<circle cx="819.5" cy="30.2" r="2" fill="#ff0000"/>
<circle cx="830.5" cy="30.2" r="2" fill="#ff0000"/>
<line x1="814.8" y1="45" x2="820" y2="45" stroke="#2a4dff" stroke-width="1.6" />
<polyline points="851.6,37.5 861,32.5" fill="none" stroke="#222" stroke-width="1.3" stroke-linejoin="round" />
<polyline points="861,32.5 868.75,29 870.5,37" fill="none" stroke="#ff0000" stroke-width="1.3" stroke-linejoin="round" />
<polyline points="860,40 870.5,38 873.5,49" fill="none" stroke="#222" stroke-width="1.3" stroke-linejoin="round" />
<line x1="861" y1="32.5" x2="860" y2="40" stroke="#222" stroke-width="1.3" />
<line x1="855" y1="31" x2="860.5" y2="27.5" stroke="#2a4dff" stroke-width="1.2" />
<polygon points="861.5,27 858.5,27 860.5,29.5" fill="#2a4dff" stroke="#2a4dff" stroke-width="0.5" stroke-linejoin="round" />
<line x1="873" y1="36" x2="872" y2="29.5" stroke="#2a4dff" stroke-width="1.2" />
<polygon points="872,28.5 870.5,31 873.5,31" fill="#2a4dff" stroke="#2a4dff" stroke-width="0.5" stroke-linejoin="round" />
<polygon points="886.7,45 886.7,37.2 893.75,30.2 907.5,30.2 907.5,45" fill="none" stroke="#222" stroke-width="1.5" stroke-linejoin="round" />
<circle cx="886.7" cy="45" r="2" fill="#ff0000"/>
<circle cx="907.5" cy="37.5" r="2" fill="#ff0000"/>
<line x1="893" y1="42.6" x2="901.5" y2="39" stroke="#2a4dff" stroke-width="1.2" />
<polygon points="903,38.5 900,37.5 901,40.5" fill="#2a4dff" stroke="#2a4dff" stroke-width="0.5" stroke-linejoin="round" />
<path d="M920 30.6 Q929.5 39 939 30.6" fill="none" stroke="#222" stroke-width="1.4" stroke-linejoin="round" />
<line x1="920" y1="30.6" x2="939" y2="30.6" stroke="#bbb" stroke-width="0.8" />
<circle cx="920" cy="30.6" r="2" fill="#ff0000"/>
<circle cx="939" cy="30.6" r="2" fill="#ff0000"/>
<polygon points="929.5,35.5 929.5,44.5 931.8,42.5 933.5,46.0 935.0,45.3 933.3,42.0 936.0,41.8" fill="#fff" stroke="#9a9a9a" stroke-width="1" stroke-linejoin="round" />
<path d="M951.6 27 Q962 37.2 951.6 48.9" fill="none" stroke="#333" stroke-width="1.4" stroke-linejoin="round" />
<line x1="961" y1="37.5" x2="967" y2="37.5" stroke="#888" stroke-width="1" />
<polygon points="968,37.5 965.5,36 965.5,39" fill="#888" stroke="#888" stroke-width="0.5" stroke-linejoin="round" />
<polyline points="967,27 973.4,37.2 967,48.9" fill="none" stroke="#333" stroke-width="1.4" stroke-linejoin="round" />
<polygon points="995,25.5 1000.5,34 990,34" fill="none" stroke="#ff0000" stroke-width="1.4" stroke-linejoin="round" />
<path d="M998 40 Q999 33.5 1002 34 Q1006 37 1006.5 43 Q1001 44 998 40 Z" fill="none" stroke="#222" stroke-width="1.5" stroke-linejoin="round" />
<circle cx="1010" cy="45.8" r="4.5" fill="none" stroke="#ff0000" stroke-width="1.4"/>
<line x1="1002.8" y1="27" x2="1011" y2="35" stroke="#2a4dff" stroke-width="1.3" />
<polygon points="1013,37 1012.5,32.5 1008.8,36.3" fill="#2a4dff" stroke="#2a4dff" stroke-width="0.5" stroke-linejoin="round" />
<path d="M1032 27 Q1036 37 1032 48" fill="none" stroke="#555" stroke-width="1.3" stroke-linejoin="round" />
<line x1="1038.4" y1="36.4" x2="1044" y2="36.4" stroke="#888" stroke-width="1" />
<polygon points="1045.5,36.4 1043,35 1043,37.8" fill="#888" stroke="#888" stroke-width="0.5" stroke-linejoin="round" />
<line x1="1050" y1="27" x2="1050" y2="47.3" stroke="#555" stroke-width="1.4" />
<polyline points="1062.6,27 1068,37 1062.6,49" fill="none" stroke="#666" stroke-width="1.4" stroke-linejoin="round" />
<line x1="1072" y1="37" x2="1077.5" y2="37" stroke="#888" stroke-width="1" />
<polygon points="1079,37 1076.5,35.6 1076.5,38.4" fill="#888" stroke="#888" stroke-width="0.5" stroke-linejoin="round" />
<polyline points="1078,27 1085,37 1078,49" fill="none" stroke="#666" stroke-width="1.4" stroke-linejoin="round" />
<circle cx="1068" cy="37" r="1.2" fill="#888"/>
<rect x="1096.0" y="27.5" width="5.5" height="20.5" rx="1" fill="none" stroke="#aaa" stroke-width="1.3" />
<line x1="1103.0" y1="37.5" x2="1109.5" y2="37.5" stroke="#888" stroke-width="1" />
<polygon points="1111.0,37.5 1108.5,36.1 1108.5,38.9" fill="#888" stroke="#888" stroke-width="0.5" stroke-linejoin="round" />
<rect x="1112.8" y="27.5" width="5.5" height="20.5" rx="1" fill="none" stroke="#aaa" stroke-width="1.3" />
<rect x="1128.5" y="27.5" width="5.5" height="20.5" rx="1" fill="none" stroke="#aaa" stroke-width="1.3" />
<line x1="1135.5" y1="37.5" x2="1142" y2="37.5" stroke="#888" stroke-width="1" />
<polygon points="1143.5,37.5 1141,36.1 1141,38.9" fill="#888" stroke="#888" stroke-width="0.5" stroke-linejoin="round" />
<rect x="1145.3" y="27.5" width="5.5" height="20.5" rx="1" fill="none" stroke="#aaa" stroke-width="1.3" />
<polyline points="1179.8,48.9 1179.8,26.6 1188.75,26.6 1194.7,48.9 1202,31.25" fill="none" stroke="#7f9ff0" stroke-width="1.1" stroke-linejoin="round" />
<path d="M1179.8 48.9 C1179 20, 1188 24, 1194 38 C1197 43, 1199 38, 1202 31.25" fill="none" stroke="#111" stroke-width="1.8" stroke-linejoin="round" />
<circle cx="1179.8" cy="26.6" r="2" fill="#ff0000"/>
<circle cx="1188.75" cy="26.6" r="2" fill="#ff0000"/>
<circle cx="1202" cy="31.25" r="2" fill="#ff0000"/>
<circle cx="1179.8" cy="48.9" r="2" fill="#ff0000"/>
<circle cx="1194.7" cy="48.9" r="2" fill="#ff0000"/>
<path d="M1225 34.5L1228 38L1225 41.5M1229.5 34.5L1232.5 38L1229.5 41.5" fill="none" stroke="#444" stroke-width="1.1" stroke-linejoin="round" />
<polygon points="1262,27.5 1272,32.5 1272,44 1262,49 1252,44 1252,32.5" fill="none" stroke="#777" stroke-width="1.2" stroke-linejoin="round" />
<polyline points="1252,32.5 1262,37.5 1272,32.5" fill="none" stroke="#777" stroke-width="1.2" stroke-linejoin="round" />
<line x1="1262" y1="37.5" x2="1262" y2="49" stroke="#777" stroke-width="1.2" />
<rect x="1303.5" y="22.5" width="32" height="32" rx="0" fill="url(#ggrid)" stroke="#707070" stroke-width="1.6" />
<line x1="1311" y1="30" x2="1311" y2="47.7" stroke="#8a8a8a" stroke-width="1" />
<line x1="1316.8" y1="30" x2="1316.8" y2="47.7" stroke="#8a8a8a" stroke-width="1" />
<line x1="1322.7" y1="30" x2="1322.7" y2="47.7" stroke="#8a8a8a" stroke-width="1" />
<line x1="1328.7" y1="30" x2="1328.7" y2="47.7" stroke="#8a8a8a" stroke-width="1" />
<line x1="1311" y1="30" x2="1328.7" y2="30" stroke="#8a8a8a" stroke-width="1" />
<line x1="1311" y1="35.9" x2="1328.7" y2="35.9" stroke="#8a8a8a" stroke-width="1" />
<line x1="1311" y1="41.7" x2="1328.7" y2="41.7" stroke="#8a8a8a" stroke-width="1" />
<line x1="1311" y1="47.7" x2="1328.7" y2="47.7" stroke="#8a8a8a" stroke-width="1" />
<path d="M1339 34.5L1342 38L1339 41.5M1343.5 34.5L1346.5 38L1343.5 41.5" fill="none" stroke="#444" stroke-width="1.1" stroke-linejoin="round" />
<line x1="1370" y1="44" x2="1383.5" y2="30.5" stroke="#901010" stroke-width="7" stroke-linecap="round"/>
<line x1="1370" y1="44" x2="1383.5" y2="30.5" stroke="#e82020" stroke-width="5" stroke-linecap="round"/>
<line x1="1379.5" y1="34.5" x2="1381.5" y2="32.5" stroke="#c8c8c8" stroke-width="5.5" />
<polygon points="1367,47.5 1368,42 1372.5,46.5" fill="#f0c8a0" stroke="#6a4a20" stroke-width="0.6" stroke-linejoin="round" />
<line x1="1366" y1="47.8" x2="1385.7" y2="47.8" stroke="#f06060" stroke-width="1.6" />
<path d="M1397 34.5L1400 38L1397 41.5M1401.5 34.5L1404.5 38L1401.5 41.5" fill="none" stroke="#444" stroke-width="1.1" stroke-linejoin="round" />
<line x1="17.66" y1="81.3" x2="36.25" y2="69.3" stroke="#262626" stroke-width="1.1" />
<circle cx="17.66" cy="81.3" r="2.05" fill="#ff0000"/>
<circle cx="36.25" cy="69.3" r="2.05" fill="#ff0000"/>
<line x1="51.6" y1="80.5" x2="69.5" y2="69.3" stroke="#262626" stroke-width="1.1" />
<line x1="51.6" y1="80.5" x2="71.1" y2="80.5" stroke="#6e8cf0" stroke-width="1.1" />
<path d="M66 72 Q68 76 66.5 80" fill="none" stroke="#e05050" stroke-width="1" stroke-linejoin="round" />
<circle cx="51.6" cy="80.5" r="2.05" fill="#ff0000"/>
<line x1="84.4" y1="74.4" x2="102.7" y2="74.4" stroke="#262626" stroke-width="1.3" />
<circle cx="84.4" cy="74.4" r="2.05" fill="#ff0000"/>
<line x1="125.5" y1="65.4" x2="125.5" y2="83.3" stroke="#262626" stroke-width="1.3" />
<circle cx="125.5" cy="83.3" r="2.05" fill="#ff0000"/>
<line x1="153.9" y1="83.3" x2="167.2" y2="65.4" stroke="#ff0000" stroke-width="1.3" />
<line x1="153.9" y1="83.3" x2="175.8" y2="83.3" stroke="#ff0000" stroke-width="1.3" />
<line x1="153.9" y1="83.3" x2="173.4" y2="72.1" stroke="#262626" stroke-width="1.1" />
<path d="M166 67.5 Q174 73 172 83" fill="none" stroke="#6e8cf0" stroke-width="1" stroke-linejoin="round" />
<rect x="167.5" y="67.3" width="4.5" height="3.8" rx="0.8" fill="#3a5af0" stroke="none" stroke-width="0" />
<line x1="167.8" y1="69.2" x2="171.7" y2="69.2" stroke="#c8d4ff" stroke-width="0.6" />
<rect x="172.3" y="76" width="4.5" height="3.8" rx="0.8" fill="#3a5af0" stroke="none" stroke-width="0" />
<line x1="172.6" y1="77.9" x2="176.5" y2="77.9" stroke="#c8d4ff" stroke-width="0.6" />
<line x1="192.2" y1="75.5" x2="211" y2="66.2" stroke="#ff0000" stroke-width="1.1" />
<line x1="197.2" y1="84.1" x2="215.6" y2="74.4" stroke="#262626" stroke-width="1.1" />
<line x1="198.4" y1="73.2" x2="202.3" y2="81" stroke="#6e8cf0" stroke-width="1.1" />
<line x1="225.5" y1="75.5" x2="244.2" y2="66.2" stroke="#ff0000" stroke-width="1.1" />
<line x1="230.2" y1="84.1" x2="248.6" y2="74.75" stroke="#262626" stroke-width="1.1" />
<circle cx="235.6" cy="81.3" r="2.05" fill="#ff0000"/>
<circle cx="271.25" cy="78.2" r="6.25" fill="none" stroke="#ff0000" stroke-width="1.1"/>
<line x1="270" y1="71.6" x2="286.1" y2="68.2" stroke="#262626" stroke-width="1.1" />
<circle cx="286.1" cy="68.2" r="2.05" fill="#ff0000"/>
<circle cx="304.4" cy="78.2" r="6.25" fill="none" stroke="#ff0000" stroke-width="1.1"/>
<line x1="302.8" y1="71.6" x2="317.7" y2="69.3" stroke="#262626" stroke-width="1.1" />
<circle cx="318.1" cy="72" r="2.6" fill="none" stroke="#ff0000" stroke-width="1.0"/>
<circle cx="338.3" cy="79.4" r="6.25" fill="none" stroke="#ff0000" stroke-width="1.1"/>
<line x1="335.6" y1="73.5" x2="348.1" y2="66.9" stroke="#262626" stroke-width="1.1" />
<line x1="345" y1="62.25" x2="353.6" y2="75.5" stroke="#ff0000" stroke-width="1.1" />
<line x1="369.2" y1="84.9" x2="392.7" y2="64.6" stroke="#262626" stroke-width="1.1" />
<line x1="378.6" y1="84.9" x2="383.3" y2="65.4" stroke="#262626" stroke-width="1.1" />
<circle cx="380.9" cy="74.75" r="2.05" fill="#ff0000"/>
<polyline points="383.5,66.5 387,70.5 384.5,71" fill="none" stroke="#ff0000" stroke-width="0.9" stroke-linejoin="round" />
<line x1="402.5" y1="84.6" x2="425.5" y2="64.6" stroke="#262626" stroke-width="1.1" />
<line x1="409" y1="69.3" x2="420" y2="81" stroke="#262626" stroke-width="1.1" />
<circle cx="414" cy="74.75" r="2.05" fill="#ff0000"/>
<rect x="454.8" y="67.25" width="20.4" height="14.05" rx="0" fill="none" stroke="#262626" stroke-width="1.2" />
<circle cx="454.8" cy="67.25" r="2.05" fill="#ff0000"/>
<circle cx="475.2" cy="81.3" r="2.05" fill="#ff0000"/>
<rect x="487.7" y="67.25" width="21.05" height="14.05" rx="0" fill="none" stroke="#262626" stroke-width="1.2" />
<polyline points="487.7,81.3 487.7,67.25 508.75,67.25" fill="none" stroke="#ff0000" stroke-width="1.4" stroke-linejoin="round" />
<circle cx="487.7" cy="67.25" r="2.05" fill="#ff0000"/>
<polygon points="520.5,73.2 534.5,65.4 540,75 526.25,82.9" fill="none" stroke="#262626" stroke-width="1.1" stroke-linejoin="round" />
<circle cx="529.8" cy="68" r="2.05" fill="#ff0000"/>
<circle cx="540" cy="75" r="2.05" fill="#ff0000"/>
<circle cx="526.25" cy="82.9" r="2.05" fill="#ff0000"/>
<polygon points="569.7,65 580.2,72.4 576.0,83.8 563.4000000000001,83.8 559.2,72.4" fill="none" stroke="#262626" stroke-width="1.1" stroke-linejoin="round" />
<circle cx="569.7" cy="75" r="2.05" fill="#ff0000"/>
<circle cx="576" cy="83.8" r="2.05" fill="#ff0000"/>
<polygon points="602.8,65 613.3,72.4 609.0999999999999,83.8 596.5,83.8 592.3,72.4" fill="none" stroke="#262626" stroke-width="1.1" stroke-linejoin="round" />
<circle cx="596.5" cy="83.8" r="2.05" fill="#ff0000"/>
<circle cx="609.1" cy="83.8" r="2.05" fill="#ff0000"/>
<polygon points="635.8,65 646.3,72.4 642.0999999999999,83.8 629.5,83.8 625.3,72.4" fill="none" stroke="#262626" stroke-width="1.1" stroke-linejoin="round" />
<circle cx="635.8" cy="75" r="2.05" fill="#ff0000"/>
<circle cx="635.8" cy="83.8" r="2.05" fill="#ff0000"/>
<polygon points="658.1,74.75 663.75,65.4 674.2,65.4 679.7,74.75 674.2,84.4 663.75,84.4" fill="none" stroke="#262626" stroke-width="1.1" stroke-linejoin="round" />
<circle cx="668.75" cy="65.7" r="2.05" fill="#ff0000"/>
<circle cx="668.75" cy="84.1" r="2.05" fill="#ff0000"/>
<polygon points="707.8,65.5 710.6213692110039,71.61671842700025 717.3105651629514,72.40983005625053 712.3650712782166,76.98328157299974 713.6778525229247,83.59016994374947 707.8,80.3 701.9221474770752,83.59016994374947 703.2349287217833,76.98328157299974 698.2894348370485,72.40983005625053 704.978630788996,71.61671842700025" fill="none" stroke="#262626" stroke-width="1.1" stroke-linejoin="round" />
<circle cx="707.8" cy="75" r="2.05" fill="#ff0000"/>
<circle cx="714" cy="83.5" r="2.05" fill="#ff0000"/>
<path d="M747.7 74.4 Q752 64 766.4 64.1" fill="none" stroke="#262626" stroke-width="1.1" stroke-linejoin="round" />
<line x1="766.4" y1="62" x2="766.4" y2="67.5" stroke="#ff0000" stroke-width="1" />
<line x1="746.5" y1="74" x2="750.5" y2="76.5" stroke="#ff0000" stroke-width="1" />
<circle cx="766.4" cy="84.9" r="2.05" fill="#ff0000"/>
<path d="M787.5 83.3 Q789 67 806.25 64.9" fill="none" stroke="#262626" stroke-width="1.1" stroke-linejoin="round" />
<line x1="793" y1="70.8" x2="807" y2="84.9" stroke="#f07060" stroke-width="1" />
<circle cx="787.5" cy="83.3" r="2.05" fill="#ff0000"/>
<circle cx="806.25" cy="64.9" r="2.05" fill="#ff0000"/>
<path d="M820.8 83.3 Q822 67 839.4 64.9" fill="none" stroke="#262626" stroke-width="1.1" stroke-linejoin="round" />
<path d="M831 83 Q832 77 839 76" fill="none" stroke="#f07060" stroke-width="1" stroke-linejoin="round" />
<line x1="839.4" y1="65" x2="839.4" y2="83" stroke="#c8c8d8" stroke-width="0.8" />
<line x1="821" y1="83.3" x2="839.4" y2="83.3" stroke="#c8c8d8" stroke-width="0.8" />
<circle cx="820.8" cy="83.3" r="2.05" fill="#ff0000"/>
<circle cx="839.4" cy="64.9" r="2.05" fill="#ff0000"/>
<path d="M854.4 84.4 Q856 67 873.1 65.7" fill="none" stroke="#262626" stroke-width="1.1" stroke-linejoin="round" />
<path d="M858 84 Q860 71 873 70" fill="none" stroke="#f07060" stroke-width="1" stroke-linejoin="round" />
<circle cx="854.4" cy="84.4" r="2.05" fill="#ff0000"/>
<circle cx="873.1" cy="65.7" r="2.05" fill="#ff0000"/>
<path d="M885.9 81.5 A 10.6 10.6 0 0 1 907.2 81.5" fill="none" stroke="#262626" stroke-width="1.2" stroke-linejoin="round" />
<line x1="896.6" y1="66" x2="896.6" y2="81" stroke="#f08070" stroke-width="1" />
<line x1="886" y1="81.5" x2="907" y2="81.5" stroke="#c8c8d8" stroke-width="0.8" stroke-dasharray="2 1"/>
<circle cx="885.9" cy="81.5" r="2.05" fill="#ff0000"/>
<circle cx="907.2" cy="81.5" r="2.05" fill="#ff0000"/>
<path d="M927.5 84.1 Q925 68 932.2 66.6 Q940 63 946.1 67.4" fill="none" stroke="#262626" stroke-width="1.1" stroke-linejoin="round" />
<circle cx="932.2" cy="66.6" r="2.05" fill="#ff0000"/>
<circle cx="946.1" cy="67.4" r="2.05" fill="#ff0000"/>
<circle cx="927.5" cy="84.1" r="2.05" fill="#ff0000"/>
<path d="M963.75 80.2 Q968 68 976.25 68.5 Q983 68.5 986.4 72.4" fill="none" stroke="#262626" stroke-width="1.2" stroke-linejoin="round" />
<path d="M969.2 81 Q973 74 982.5 76.3" fill="none" stroke="#ff0000" stroke-width="1.3" stroke-linejoin="round" />
<line x1="968.5" y1="71.5" x2="971" y2="74.5" stroke="#4a6af0" stroke-width="1" />
<path d="M996.25 80.2 Q1001 68 1008.3 68.5 Q1015 68.5 1019.7 72.4" fill="none" stroke="#262626" stroke-width="1.2" stroke-linejoin="round" />
<path d="M1002 81 Q1006 74 1015 76.3" fill="none" stroke="#ff0000" stroke-width="1.3" stroke-linejoin="round" />
<circle cx="1001.6" cy="72.1" r="2.05" fill="#ff0000"/>
<line x1="1035.6" y1="77.9" x2="1048.1" y2="70.8" stroke="#ff0000" stroke-width="1.3" />
<path d="M1048.1 70.8 Q1056 68 1056.25 79.1" fill="none" stroke="#262626" stroke-width="1.1" stroke-linejoin="round" />
<line x1="1050.5" y1="76.3" x2="1056" y2="79" stroke="#ff0000" stroke-width="1" />
<circle cx="1056.25" cy="79.1" r="2.05" fill="#ff0000"/>
<line x1="1070" y1="63" x2="1070" y2="87.25" stroke="#f06060" stroke-width="2.2" />
<path d="M1070 82.6 Q1072 66 1088 64.6" fill="none" stroke="#262626" stroke-width="1.1" stroke-linejoin="round" />
<line x1="1074.7" y1="70.8" x2="1088.75" y2="83.3" stroke="#f07060" stroke-width="1" />
<circle cx="1088" cy="64.6" r="2.05" fill="#ff0000"/>
<circle cx="1130.65" cy="75.2" r="9.5" fill="none" stroke="#262626" stroke-width="1.1"/>
<circle cx="1130.65" cy="75.2" r="2.05" fill="#ff0000"/>
<circle cx="1135.8" cy="67.3" r="2.05" fill="#ff0000"/>
<rect x="1159.6" y="65.5" width="20.1" height="19.4" rx="0" fill="#e4e6ee" stroke="#cdd1e2" stroke-width="1" />
<circle cx="1169.5" cy="75.2" r="9.5" fill="none" stroke="#262626" stroke-width="1.1"/>
<line x1="1169.5" y1="75.2" x2="1174.7" y2="68.9" stroke="#f07060" stroke-width="1" />
<circle cx="1169.5" cy="75.2" r="2.05" fill="#ff0000"/>
<rect x="1192.5" y="65.5" width="20.1" height="19.4" rx="0" fill="#e4e6ee" stroke="#cdd1e2" stroke-width="1" />
<circle cx="1202.5" cy="75.2" r="9.5" fill="none" stroke="#262626" stroke-width="1.1"/>
<line x1="1197" y1="81" x2="1208" y2="69" stroke="#f07060" stroke-width="1" />
<circle cx="1202.5" cy="75.2" r="2.05" fill="#ff0000"/>
<circle cx="1242" cy="75.2" r="9.5" fill="none" stroke="#262626" stroke-width="1.1"/>
<line x1="1242" y1="75.2" x2="1247.5" y2="68" stroke="#f07060" stroke-width="1" />
<circle cx="1233.9" cy="79.3" r="2.05" fill="#ff0000"/>
<circle cx="1247" cy="83.1" r="2.05" fill="#ff0000"/>
<circle cx="1280.8" cy="75.2" r="9.5" fill="none" stroke="#262626" stroke-width="1.1"/>
<line x1="1272.5" y1="79.3" x2="1289.4" y2="70" stroke="#6e8cf0" stroke-width="1.2" />
<circle cx="1272.5" cy="79.3" r="2.05" fill="#ff0000"/>
<circle cx="1289.4" cy="70" r="2.05" fill="#ff0000"/>
<path d="M1309.6 71.7L1312.6 75.2L1309.6 78.7M1314.1 71.7L1317.1 75.2L1314.1 78.7" fill="none" stroke="#444" stroke-width="1.1" stroke-linejoin="round" />
<ellipse cx="1345.9" cy="75.2" rx="14" ry="5.8" transform="rotate(-50 1345.9 75.2)" fill="none" stroke="#111" stroke-width="1.4"/>
<circle cx="1345.9" cy="75.8" r="2.05" fill="#ff0000"/>
<circle cx="1342.3" cy="71.1" r="2.05" fill="#ff0000"/>
<circle cx="1356" cy="65" r="2.05" fill="#ff0000"/>
<path d="M1366 71.7L1369 75.2L1366 78.7M1370.5 71.7L1373.5 75.2L1370.5 78.7" fill="none" stroke="#444" stroke-width="1.1" stroke-linejoin="round" />
<path d="M1396.5 71.7L1399.5 75.2L1396.5 78.7M1401.0 71.7L1404.0 75.2L1401.0 78.7" fill="none" stroke="#444" stroke-width="1.1" stroke-linejoin="round" />
<polygon points="15.6,101.6 15.6,121.9 23.4,121.9" fill="none" stroke="#858585" stroke-width="1.4" stroke-linejoin="round" />
<polygon points="30.5,101.6 30.5,121.9 38.3,121.9" fill="none" stroke="#b4b4b4" stroke-width="1.4" stroke-linejoin="round" />
<path d="M20.3 111.0 H28.25 V109.0 L31.25 112.5 L28.25 116.0 V114.0 H20.3 Z" fill="#fff" stroke="#888" stroke-width="0.9" stroke-linejoin="round" />
<polygon points="48.4,111.75 48.4,122.7 56.25,122.7" fill="none" stroke="#858585" stroke-width="1.4" stroke-linejoin="round" />
<polygon points="58.6,108.2 70.3,100 70.3,108.2" fill="none" stroke="#b4b4b4" stroke-width="1.4" stroke-linejoin="round" />
<path d="M59.5 120.3 Q66 118 65.6 110" fill="none" stroke="#aaa" stroke-width="3" stroke-linejoin="round" />
<path d="M59.5 120.3 Q66 118 65.6 110" fill="none" stroke="#fff" stroke-width="1.4" stroke-linejoin="round" />
<polygon points="62.5,111 65.6,107 68.7,111" fill="#fff" stroke="#888" stroke-width="0.9" stroke-linejoin="round" />
<polygon points="81.25,101.6 81.25,121.9 89.8,121.9" fill="none" stroke="#858585" stroke-width="1.4" stroke-linejoin="round" />
<polygon points="98.4,105.5 98.4,118 103.9,118" fill="none" stroke="#b4b4b4" stroke-width="1.4" stroke-linejoin="round" />
<path d="M87.5 111.8 H94.7 V109.8 L97.7 113.3 L94.7 116.8 V114.8 H87.5 Z" fill="#fff" stroke="#888" stroke-width="0.9" stroke-linejoin="round" />
<polygon points="113.3,107.8 133.6,99.25 119.5,113.3" fill="none" stroke="#858585" stroke-width="1.4" stroke-linejoin="round" />
<polygon points="124.2,118.75 138.3,104.7 129.7,124.25" fill="none" stroke="#b4b4b4" stroke-width="1.4" stroke-linejoin="round" />
<line x1="117" y1="118" x2="136" y2="99" stroke="#aaa" stroke-width="1.1" stroke-dasharray="3 2"/>
<polygon points="156.25,101.6 148.4,121.9 156.25,121.9" fill="none" stroke="#858585" stroke-width="1.4" stroke-linejoin="round" />
<polygon points="162.5,101.6 162.5,121.9 170.3,121.9" fill="none" stroke="#b4b4b4" stroke-width="1.4" stroke-linejoin="round" />
<line x1="159.4" y1="100" x2="159.4" y2="124" stroke="#999" stroke-width="1.1" stroke-dasharray="3 2"/>
<polygon points="182,100.8 182,108.6 203.1,108.6" fill="none" stroke="#858585" stroke-width="1.4" stroke-linejoin="round" />
<polygon points="182,115.7 203.1,115.7 182,123.5" fill="none" stroke="#b4b4b4" stroke-width="1.4" stroke-linejoin="round" />
<line x1="182" y1="111.9" x2="203" y2="111.9" stroke="#aaa" stroke-width="1.5" stroke-dasharray="3 2"/>
<path d="M213.5 105 H221 V103.3 L224 106 L221 108.7 V107 H213.5 Z" fill="#f4f4f4" stroke="#a0a0a0" stroke-width="0.9" stroke-linejoin="round" />
<path d="M228.5 103 A 4.6 4.6 0 1 0 235.5 106.5" fill="none" stroke="#b0b0b0" stroke-width="1.6" stroke-linejoin="round" />
<polygon points="234,101.5 236.5,105.5 232,105.5" fill="#f4f4f4" stroke="#a0a0a0" stroke-width="0.8" stroke-linejoin="round" />
<polygon points="213.5,111.4 213.5,122.8 221.9,122.8" fill="none" stroke="#8a8a8a" stroke-width="1.5" stroke-linejoin="round" />
<polygon points="225.4,120.3 236.8,112.4 236.8,120.3" fill="none" stroke="#9a9a9a" stroke-width="1.2" stroke-linejoin="round" />
<polygon points="246.7,110.9 246.7,121.8 254.7,121.8" fill="none" stroke="#8a8a8a" stroke-width="1.5" stroke-linejoin="round" />
<polygon points="260.7,100.5 260.7,111.4 268.6,111.4" fill="none" stroke="#a8a8a8" stroke-width="1.3" stroke-linejoin="round" />
<path d="M257 121 Q264.5 119 264.5 113" fill="none" stroke="#a8a8a8" stroke-width="2.6" stroke-linejoin="round" />
<path d="M257 121 Q264.5 119 264.5 113" fill="none" stroke="#f4f4f4" stroke-width="1.1" stroke-linejoin="round" />
<rect x="281.5" y="100.5" width="11.5" height="11.4" rx="0" fill="none" stroke="#808080" stroke-width="1.4" />
<line x1="293" y1="100.5" x2="281.5" y2="111.9" stroke="#808080" stroke-width="1.3" />
<line x1="281.5" y1="111.9" x2="289.5" y2="115.9" stroke="#888" stroke-width="1" />
<line x1="293" y1="100.5" x2="301.9" y2="115.9" stroke="#888" stroke-width="1" />
<polyline points="289.5,124.8 289.5,115.9 295.5,109.9 301.9,115.9 301.9,124.8" fill="none" stroke="#808080" stroke-width="1.5" stroke-linejoin="round" />
<line x1="289.5" y1="115.9" x2="301.9" y2="115.9" stroke="#9a9a9a" stroke-width="1.2" />
<line x1="312.9" y1="100" x2="312.9" y2="123.8" stroke="#888" stroke-width="1.5" />
<rect x="315.3" y="101" width="9.5" height="4.4" rx="0.5" fill="#f6f6f6" stroke="#6a6a6a" stroke-width="1.5" />
<rect x="315.3" y="109.4" width="19.9" height="5" rx="1" fill="#f6f6f6" stroke="#6a6a6a" stroke-width="1.5" />
<rect x="315.3" y="118.4" width="16.4" height="4.9" rx="0.5" fill="#f6f6f6" stroke="#6a6a6a" stroke-width="1.5" />
<line x1="351.25" y1="112.5" x2="370" y2="103.2" stroke="#ff0000" stroke-width="1.1" />
<line x1="356" y1="121.4" x2="374.7" y2="111.75" stroke="#262626" stroke-width="1.1" />
<line x1="357.5" y1="109.4" x2="361.4" y2="118" stroke="#6e8cf0" stroke-width="1.1" />
<line x1="384.1" y1="112.5" x2="402.8" y2="103.2" stroke="#ff0000" stroke-width="1.1" />
<line x1="388.75" y1="121.9" x2="407.5" y2="111.75" stroke="#262626" stroke-width="1.1" />
<circle cx="394.7" cy="118.3" r="2.05" fill="#ff0000"/>
<line x1="422.3" y1="100.8" x2="446.25" y2="113" stroke="#262626" stroke-width="1.1" />
<line x1="422.3" y1="123.5" x2="429.4" y2="112.5" stroke="#262626" stroke-width="1.1" />
<line x1="429.4" y1="112.5" x2="433.3" y2="106.3" stroke="#ff0000" stroke-width="1.1" />
<path d="M432 121 L440 111 L438 109.5 L443.5 107.5 L442.5 113 L440.8 111.8 L433.5 122 Z" fill="#fff" stroke="#6e8cf0" stroke-width="1" stroke-linejoin="round" />
<line x1="457.2" y1="101.1" x2="468.1" y2="106.3" stroke="#262626" stroke-width="1.1" />
<polyline points="468.1,106.3 478.75,108.6 471.25,113.3" fill="none" stroke="#ff0000" stroke-width="1.1" stroke-linejoin="round" />
<line x1="471.25" y1="113.3" x2="457.2" y2="123.5" stroke="#262626" stroke-width="1.1" />
<path d="M467 100.5 L472 102 L472.5 100.5 L477 104.5 L471 106 L471.5 104.5 L466.5 103 Z" fill="#fff" stroke="#6e8cf0" stroke-width="1" stroke-linejoin="round" />
<path d="M468 121 L473 117.5 L472 116.5 L477.5 115.5 L475 120 L474 119 L469 122.5 Z" fill="#fff" stroke="#6e8cf0" stroke-width="1" stroke-linejoin="round" />
<line x1="505.6" y1="100.5" x2="497" y2="111.75" stroke="#262626" stroke-width="1.1" />
<line x1="497" y1="111.75" x2="490.8" y2="122.4" stroke="#ff0000" stroke-width="1.1" />
<path d="M500 119 L505.5 111.5 L504 110.5 L508 109 L507.5 113.5 L506.5 112.5 L501.5 120 Z" fill="#fff" stroke="#6e8cf0" stroke-width="1" stroke-linejoin="round" />
<text x="508" y="119" font-family="Liberation Sans" font-size="7.5" fill="#262626" >x</text>
<path d="M535.3 103.6 H526 Q522.5 103.6 522.5 107 V118 Q522.5 121.4 526 121.4 H535.3 V115.8 H529 V109.2 H535.3" fill="none" stroke="#262626" stroke-width="1.3" stroke-linejoin="round" />
<path d="M535.3 103.6 H544.4 V109.2 H538 V115.8 H544.4 V121.4 H535.3" fill="none" stroke="#ff0000" stroke-width="1.5" stroke-linejoin="round" />
<path d="M530.3 115 H538 V113.3 L542.3 116.4 L538 119.5 V117.8 H530.3 Z" fill="#cfe0ff" stroke="#6e8cf0" stroke-width="1" stroke-linejoin="round" />
<rect x="559.5" y="106.3" width="14.5" height="11.4" rx="0" fill="none" stroke="#9a9a9a" stroke-width="1.3" />
<path d="M561 117.7 Q561 110 569 110 V117.7" fill="none" stroke="#9a9a9a" stroke-width="1.2" stroke-linejoin="round" />
<line x1="553" y1="120" x2="576" y2="99" stroke="#d0d0d0" stroke-width="0.9" />
<line x1="555" y1="100" x2="578" y2="124" stroke="#d0d0d0" stroke-width="0.9" />
<line x1="595.5" y1="103.2" x2="604.8" y2="103.2" stroke="#262626" stroke-width="1.3" />
<line x1="604.8" y1="103.2" x2="614.2" y2="112.5" stroke="#ff0000" stroke-width="1.5" />
<line x1="614.2" y1="112.5" x2="614.2" y2="121.9" stroke="#262626" stroke-width="1.3" />
<line x1="628.3" y1="103.2" x2="637.7" y2="103.2" stroke="#262626" stroke-width="1.3" />
<path d="M637.7 103.2 Q647.5 103.2 647.5 113" fill="none" stroke="#ff0000" stroke-width="1.5" stroke-linejoin="round" />
<line x1="647.5" y1="113" x2="647.5" y2="121.9" stroke="#262626" stroke-width="1.3" />
<circle cx="637.7" cy="113.3" r="1.1" fill="#2a4dff"/>
<polygon points="673.5,101 676,101 681.5,110.5 677,111" fill="#f4f4f4" stroke="#9a9a9a" stroke-width="0.9" stroke-linejoin="round" />
<polygon points="667.5,109.2 681,110 681.5,113.5 670,112.3" fill="#ececec" stroke="#9a9a9a" stroke-width="0.9" stroke-linejoin="round" />
<line x1="664.2" y1="120.6" x2="680.4" y2="98.5" stroke="#111" stroke-width="1.3" />
<ellipse cx="687.1" cy="111.7" rx="4.1" ry="2.8" fill="none" stroke="#ee1c1c" stroke-width="1.9"/>
<ellipse cx="680.9" cy="120.1" rx="2.6" ry="4.1" fill="none" stroke="#ee1c1c" stroke-width="1.9"/>
<line x1="681" y1="112" x2="683" y2="111.5" stroke="#ee1c1c" stroke-width="1.6" />
<line x1="680.5" y1="113" x2="680.7" y2="116" stroke="#ee1c1c" stroke-width="1.6" />
<circle cx="673.9" cy="107.7" r="2.1" fill="#ff0000"/>
<polygon points="706.5,101 709,101 714.5,110.5 710,111" fill="#f4f4f4" stroke="#9a9a9a" stroke-width="0.9" stroke-linejoin="round" />
<polygon points="700.5,109.2 714,110 714.5,113.5 703,112.3" fill="#ececec" stroke="#9a9a9a" stroke-width="0.9" stroke-linejoin="round" />
<line x1="697.2" y1="120.6" x2="713.4" y2="98.5" stroke="#777" stroke-width="1.3" />
<ellipse cx="720.1" cy="111.7" rx="4.1" ry="2.8" fill="none" stroke="#9a9a9a" stroke-width="1.9"/>
<ellipse cx="713.9" cy="120.1" rx="2.6" ry="4.1" fill="none" stroke="#9a9a9a" stroke-width="1.9"/>
<line x1="714" y1="112" x2="716" y2="111.5" stroke="#9a9a9a" stroke-width="1.6" />
<line x1="713.5" y1="113" x2="713.7" y2="116" stroke="#9a9a9a" stroke-width="1.6" />
<circle cx="706.9" cy="107.7" r="2.1" fill="#999"/>
<line x1="738.1" y1="101.6" x2="738.1" y2="121.4" stroke="#262626" stroke-width="1.3" />
<line x1="749.5" y1="101.6" x2="749.5" y2="121.4" stroke="#262626" stroke-width="1.3" />
<line x1="731.9" y1="111.4" x2="738.1" y2="111.4" stroke="#262626" stroke-width="1.3" />
<line x1="738.1" y1="111.4" x2="749.5" y2="111.4" stroke="#aaa" stroke-width="1" />
<line x1="749.5" y1="111.4" x2="756.1" y2="111.4" stroke="#262626" stroke-width="1.3" />
<circle cx="738.1" cy="111.4" r="2.05" fill="#ff0000"/>
<circle cx="749.5" cy="111.4" r="2.05" fill="#ff0000"/>
<line x1="768.3" y1="101.5" x2="768.3" y2="121.5" stroke="#262626" stroke-width="1.4" stroke-dasharray="4 2"/>
<line x1="779.5" y1="101.5" x2="779.5" y2="121.5" stroke="#262626" stroke-width="1.3" />
<line x1="779.5" y1="108.3" x2="786.6" y2="108.3" stroke="#262626" stroke-width="1.6" />
<line x1="779.5" y1="115.3" x2="786.6" y2="115.3" stroke="#262626" stroke-width="1.6" />
<line x1="769" y1="108.3" x2="779" y2="108.3" stroke="#bbb" stroke-width="0.8" stroke-dasharray="1 1.5"/>
<line x1="769" y1="115.3" x2="779" y2="115.3" stroke="#bbb" stroke-width="0.8" stroke-dasharray="1 1.5"/>
<circle cx="779.5" cy="108.3" r="2.05" fill="#ff0000"/>
<circle cx="779.5" cy="115.3" r="2.05" fill="#ff0000"/>
<line x1="804.5" y1="101.5" x2="804.5" y2="121.5" stroke="#262626" stroke-width="1.3" />
<line x1="815.5" y1="101.5" x2="815.5" y2="121.5" stroke="#262626" stroke-width="1.3" />
<line x1="804.5" y1="111.4" x2="815.5" y2="111.4" stroke="#262626" stroke-width="1.6" />
<circle cx="804.5" cy="111.4" r="2.05" fill="#ff0000"/>
<circle cx="815.5" cy="111.4" r="2.05" fill="#ff0000"/>
<line x1="797.9" y1="109.8" x2="801.1" y2="113" stroke="#5a8af0" stroke-width="1" />
<line x1="797.9" y1="113" x2="801.1" y2="109.8" stroke="#5a8af0" stroke-width="1" />
<line x1="818.1999999999999" y1="109.8" x2="821.4" y2="113" stroke="#5a8af0" stroke-width="1" />
<line x1="818.1999999999999" y1="113" x2="821.4" y2="109.8" stroke="#5a8af0" stroke-width="1" />
<line x1="831.6" y1="122.7" x2="854.5" y2="100" stroke="#262626" stroke-width="1.2" />
<circle cx="842.5" cy="112.2" r="2.05" fill="#ff0000"/>
<path d="M872 110 Q878 102 891 106" fill="none" stroke="#555" stroke-width="1.3" stroke-linejoin="round" />
<polygon points="893,106.5 889,104 889.5,108.5" fill="#555" stroke="#555" stroke-width="0.6" stroke-linejoin="round" />
<line x1="872" y1="117" x2="893.5" y2="109.5" stroke="#555" stroke-width="1.3" />
<polygon points="871,108 874,113 869,113" fill="#555" stroke="#555" stroke-width="0.6" stroke-linejoin="round" />
<line x1="923" y1="105.5" x2="932" y2="121.5" stroke="#6a6a6a" stroke-width="7" stroke-linecap="round"/>
<line x1="924" y1="106" x2="930" y2="117" stroke="#8a8a8a" stroke-width="2" stroke-linecap="round"/>
<path d="M921 103.5 Q918 98 914 104" fill="none" stroke="#888" stroke-width="1.2" stroke-linejoin="round" />
<line x1="911.25" y1="107.8" x2="914.75" y2="107.8" stroke="#b8b8b8" stroke-width="1" />
<line x1="911.25" y1="107.8" x2="913.7248737341529" y2="110.27487373415292" stroke="#b8b8b8" stroke-width="1" />
<line x1="911.25" y1="107.8" x2="911.25" y2="111.3" stroke="#b8b8b8" stroke-width="1" />
<line x1="911.25" y1="107.8" x2="908.7751262658471" y2="110.27487373415292" stroke="#b8b8b8" stroke-width="1" />
<line x1="911.25" y1="107.8" x2="907.75" y2="107.8" stroke="#b8b8b8" stroke-width="1" />
<line x1="911.25" y1="107.8" x2="908.7751262658471" y2="105.32512626584708" stroke="#b8b8b8" stroke-width="1" />
<line x1="911.25" y1="107.8" x2="911.25" y2="104.3" stroke="#b8b8b8" stroke-width="1" />
<line x1="911.25" y1="107.8" x2="913.7248737341529" y2="105.32512626584708" stroke="#b8b8b8" stroke-width="1" />
<rect x="948.75" y="114" width="8.6" height="6.8" rx="1" fill="#a6a6a6" stroke="#666" stroke-width="1" />
<rect x="953.4" y="107" width="13.3" height="9.4" rx="0" fill="#f4f4f4" stroke="#666" stroke-width="1" />
<rect x="962.8" y="103.2" width="8.6" height="6.2" rx="1" fill="#a6a6a6" stroke="#666" stroke-width="1" />
<rect x="986.25" y="107" width="13.3" height="9.4" rx="0" fill="#f4f4f4" stroke="#666" stroke-width="1" />
<rect x="981.6" y="114" width="8.6" height="6.8" rx="1" fill="#a6a6a6" stroke="#666" stroke-width="1" />
<rect x="996.4" y="103.2" width="8.6" height="6.2" rx="1" fill="#a6a6a6" stroke="#666" stroke-width="1" />
<circle cx="1025" cy="102" r="2.6" fill="#fff" stroke="#555" stroke-width="1.1"/>
<path d="M1020 106 H1030 V116 H1028.5 V124 H1025.8 V116.5 H1024.2 V124 H1021.5 V116 H1020 Z" fill="#fff" stroke="#666" stroke-width="1.1" stroke-linejoin="round" />
<line x1="1020.8" y1="107" x2="1020.8" y2="115.5" stroke="#888" stroke-width="1.6" />
<line x1="1029.2" y1="107" x2="1029.2" y2="115.5" stroke="#888" stroke-width="1.6" />
<circle cx="1039" cy="102" r="2.6" fill="#fff" stroke="#555" stroke-width="1.1"/>
<path d="M1034 106 H1044 V116 H1042.5 V124 H1039.8 V116.5 H1038.2 V124 H1035.5 V116 H1034 Z" fill="#fff" stroke="#666" stroke-width="1.1" stroke-linejoin="round" />
<line x1="1034.8" y1="107" x2="1034.8" y2="115.5" stroke="#888" stroke-width="1.6" />
<line x1="1043.2" y1="107" x2="1043.2" y2="115.5" stroke="#888" stroke-width="1.6" />
<text x="1055" y="109.8" font-family="Liberation Sans" font-size="10.5" fill="#262626" >0.00</text>
<polyline points="1053,114.5 1056.5,116.4 1053,118.3" fill="none" stroke="#5a7af0" stroke-width="1" stroke-linejoin="round" />
<line x1="1058.9" y1="116.4" x2="1070.6" y2="116.4" stroke="#444" stroke-width="1.3" />
<polyline points="1077.5,114.5 1074,116.4 1077.5,118.3" fill="none" stroke="#5a9af0" stroke-width="1" stroke-linejoin="round" />
<rect x="1094.5" y="100" width="18.5" height="8.5" rx="2.5" fill="#c4c4c4" stroke="#888" stroke-width="1" />
<path d="M1113 104 h2.5 v6 h-12 v4" fill="none" stroke="#888" stroke-width="1.3" stroke-linejoin="round" />
<rect x="1101" y="114" width="4" height="10.5" rx="1.5" fill="#9a9a9a" stroke="#777" stroke-width="1" />
<text x="1144.5" y="121.5" font-family="Liberation Serif" font-size="28" fill="#262626" >A</text>
<rect x="1176.3" y="102.8" width="23.6" height="18.4" rx="0" fill="#fff" stroke="#262626" stroke-width="1.5" />
<path d="M1178 120 L1184 111 L1187 114.5 L1191 108.5 L1198 120 Z" fill="#262626" stroke="none" stroke-width="0" stroke-linejoin="round" />
<circle cx="1193" cy="106.5" r="1.8" fill="#262626" stroke="none" stroke-width="0"/>
<circle cx="1238.5" cy="111.2" r="10.5" fill="none" stroke="#262626" stroke-width="1.2"/>
<line x1="1225.5" y1="111.2" x2="1251.5" y2="111.2" stroke="#f06060" stroke-width="1" stroke-dasharray="3 1.5"/>
<line x1="1238.5" y1="98.2" x2="1238.5" y2="124.2" stroke="#f06060" stroke-width="1" stroke-dasharray="3 1.5"/>
<circle cx="1238.5" cy="111.2" r="1.5" fill="#f06060"/>
<path d="M1281.8 107.7L1284.8 111.2L1281.8 114.7M1286.3 107.7L1289.3 111.2L1286.3 114.7" fill="none" stroke="#444" stroke-width="1.1" stroke-linejoin="round" />
<line x1="1309" y1="111" x2="1329" y2="103.5" stroke="#262626" stroke-width="1.1" />
<polygon points="1309,111 1313.5,108 1314,111" fill="#262626" stroke="#262626" stroke-width="0.5" stroke-linejoin="round" />
<polygon points="1329,103.5 1324.5,103.2 1325.5,106.3" fill="#262626" stroke="#262626" stroke-width="0.5" stroke-linejoin="round" />
<line x1="1307.5" y1="106.5" x2="1310" y2="115.5" stroke="#262626" stroke-width="1.2" />
<line x1="1327.5" y1="99.5" x2="1330.5" y2="108" stroke="#262626" stroke-width="1.2" />
<line x1="1312.6" y1="121.5" x2="1331.3" y2="112.5" stroke="#ff0000" stroke-width="1.3" />
<path d="M1339.3 107.7L1342.3 111.2L1339.3 114.7M1343.8 107.7L1346.8 111.2L1343.8 114.7" fill="none" stroke="#444" stroke-width="1.1" stroke-linejoin="round" />
<rect x="1365.3" y="105" width="21.5" height="15.2" rx="2" fill="#e4e4e4" stroke="#c0c0c0" stroke-width="1.2" />
<line x1="1366" y1="120" x2="1372" y2="105.5" stroke="#c8c8c8" stroke-width="0.9" />
<line x1="1370" y1="120" x2="1376" y2="105.5" stroke="#c8c8c8" stroke-width="0.9" />
<line x1="1374" y1="120" x2="1380" y2="105.5" stroke="#c8c8c8" stroke-width="0.9" />
<line x1="1378" y1="120" x2="1384" y2="105.5" stroke="#c8c8c8" stroke-width="0.9" />
<line x1="1382" y1="120" x2="1388" y2="105.5" stroke="#c8c8c8" stroke-width="0.9" />
<line x1="1386" y1="120" x2="1392" y2="105.5" stroke="#c8c8c8" stroke-width="0.9" />
<circle cx="1376" cy="112.5" r="3.2" fill="#f0f0f0" stroke="#c0c0c0" stroke-width="1.2"/>
<path d="M1396.3 107.7L1399.3 111.2L1396.3 114.7M1400.8 107.7L1403.8 111.2L1400.8 114.7" fill="none" stroke="#444" stroke-width="1.1" stroke-linejoin="round" />
<rect x="13.5" y="135.5" width="40" height="27" rx="5" fill="#f7f7f7" stroke="#7a7a7a" stroke-width="1.8" />
<polygon points="29,142.5 29,155 32,152.3 34.5,157.5 36.3,156.6 33.8,151.5 37.8,151.2" fill="#fff" stroke="#6a6a6a" stroke-width="1" stroke-linejoin="round" />
</svg>
<div class="a" style="left:1px;top:167px;width:37px;height:548px;background:#f0f0f0"></div>
<div class="a" style="left:37px;top:167px;width:1px;height:548px;background:#c9c9c9"></div>
<div class="a" style="left:38px;top:168px;width:897px;height:24px;background:#fff"></div>
<div class="t" style="left:420px;top:175px;font-size:11.2px;color:#000;">* Circuit-Type Hatching.dxf</div>
<div class="a" style="left:38px;top:192px;width:897px;height:523px;background:#000"></div>
<svg style="left:0;top:0" width="1408" height="793">
<circle cx="123.5" cy="297.6" r="74.8" fill="none" stroke="#ff0000" stroke-width="2"/>
<circle cx="849.6" cy="377.5" r="75" fill="none" stroke="#ff0000" stroke-width="2"/>
<polygon points="123.6,297.6 849.6,377.2 783,594.5 414.8,651.8" fill="none" stroke="#ffff00" stroke-width="4.2" stroke-linejoin="round"/>
</svg>
<div class="a" style="left:939px;top:169px;width:234px;height:19px;background:#dadbdc;border:1px solid #c6c7c8"></div>
<div class="t" style="left:944px;top:173px;font-size:11.6px;color:#000;">Layer List</div>
<svg style="left:1135px;top:173px" width="12" height="12"><rect x="3" y="1" width="6" height="5.5" fill="none" stroke="#222" stroke-width="1.3"/><rect x="3" y="1" width="6" height="1.6" fill="#222"/><rect x="0.5" y="4.5" width="6" height="5.5" fill="#dadbdc" stroke="#222" stroke-width="1.3"/><rect x="0.5" y="4.5" width="6" height="1.6" fill="#222"/></svg>
<svg style="left:1156px;top:174px" width="10" height="10"><path d="M1 1L9 9M9 1L1 9" stroke="#222" stroke-width="1.8"/></svg>
<div class="a" style="left:940px;top:191px;width:45px;height:20px;background:#e1e1e1;border:1px solid #adadad"></div>
<div class="a" style="left:987px;top:191px;width:45px;height:20px;background:#e1e1e1;border:1px solid #adadad"></div>
<div class="a" style="left:1034px;top:191px;width:45px;height:20px;background:#e1e1e1;border:1px solid #adadad"></div>
<div class="a" style="left:1080px;top:191px;width:45px;height:20px;background:#e1e1e1;border:1px solid #adadad"></div>
<div class="a" style="left:1127px;top:191px;width:45px;height:20px;background:#e1e1e1;border:1px solid #adadad"></div>
<div class="a" style="left:939px;top:212px;width:234px;height:119px;background:#fff;border:1px solid #828790"></div>
<div class="a" style="left:943px;top:219px;width:16px;height:10px;background:#000000;border:1px solid #111"></div>
<div class="t" style="left:965px;top:218px;font-size:12px;color:#000;">0</div>
<div class="a" style="left:943px;top:239px;width:16px;height:10px;background:#33ccf0;border:1px solid #111"></div>
<div class="t" style="left:965px;top:238px;font-size:12px;color:#000;">Circuit-Typ...</div>
<div class="a" style="left:943px;top:259px;width:16px;height:10px;background:#ff0000;border:1px solid #111"></div>
<div class="t" style="left:965px;top:258px;font-size:12px;color:#000;">orig. Position</div>
<div class="a" style="left:940px;top:273px;width:232px;height:20px;background:#d9d9d9"></div>
<div class="a" style="left:943px;top:279px;width:16px;height:10px;background:#b5bd19;border:1px solid #111"></div>
<div class="t" style="left:965px;top:278px;font-size:12px;color:#000;">Shape</div>
<div class="a" style="left:1177px;top:169px;width:194px;height:19px;background:#dadbdc;border:1px solid #c6c7c8"></div>
<div class="t" style="left:1182px;top:173px;font-size:11.6px;color:#000;">Block List</div>
<svg style="left:1333px;top:173px" width="12" height="12"><rect x="3" y="1" width="6" height="5.5" fill="none" stroke="#222" stroke-width="1.3"/><rect x="3" y="1" width="6" height="1.6" fill="#222"/><rect x="0.5" y="4.5" width="6" height="5.5" fill="#dadbdc" stroke="#222" stroke-width="1.3"/><rect x="0.5" y="4.5" width="6" height="1.6" fill="#222"/></svg>
<svg style="left:1354px;top:174px" width="10" height="10"><path d="M1 1L9 9M9 1L1 9" stroke="#222" stroke-width="1.8"/></svg>
<div class="a" style="left:1178px;top:191px;width:22px;height:20px;background:#e1e1e1;border:1px solid #adadad"></div>
<div class="a" style="left:1202px;top:191px;width:22px;height:20px;background:#e1e1e1;border:1px solid #adadad"></div>
<div class="a" style="left:1226px;top:191px;width:22px;height:20px;background:#e1e1e1;border:1px solid #adadad"></div>
<div class="a" style="left:1250px;top:191px;width:22px;height:20px;background:#cfcfcf;border:1px solid #adadad"></div>
<div class="a" style="left:1274px;top:191px;width:22px;height:20px;background:#cfcfcf;border:1px solid #adadad"></div>
<div class="a" style="left:1298px;top:191px;width:22px;height:20px;background:#e1e1e1;border:1px solid #adadad"></div>
<div class="a" style="left:1322px;top:191px;width:22px;height:20px;background:#cfcfcf;border:1px solid #adadad"></div>
<div class="a" style="left:1346px;top:191px;width:22px;height:20px;background:#e1e1e1;border:1px solid #adadad"></div>
<div class="a" style="left:1177px;top:212px;width:194px;height:119px;background:#fff;border:1px solid #828790"></div>
<div class="t" style="left:1225px;top:218px;font-size:11.8px;color:#000;">Model (*Model_Space)</div>
<div class="t" style="left:1225px;top:238px;font-size:11.4px;color:#000;">Layout1 (*Paper_Space)</div>
<div class="a" style="left:1371px;top:167px;width:36px;height:548px;background:#f0f0f0"></div>
<div class="a" style="left:1370px;top:714px;width:37px;height:1px;background:#b4b8b8"></div>
<div class="a" style="left:941px;top:418px;width:20px;height:80px;background:#f0f0f0;border:1px solid #d9d9d9;border-right:none"></div>
<div class="a" style="left:941px;top:498px;width:20px;height:86px;background:#f0f0f0;border:1px solid #d9d9d9;border-right:none"></div>
<div class="a" style="left:941px;top:584px;width:20px;height:52px;background:#f0f0f0;border:1px solid #d9d9d9;border-right:none"></div>
<div class="a" style="left:941px;top:636px;width:20px;height:77px;background:#f0f0f0;border:1px solid #d9d9d9;border-right:none"></div>
<div class="a" style="left:939px;top:335px;width:22px;height:84px;background:#fff;border:1px solid #d9d9d9;border-right:none"></div>
<div class="t" style="left:950px;top:377px;font-size:11.5px;color:#000;transform:translate(-50%,-50%) rotate(-90deg)">Property ...</div>
<div class="t" style="left:951px;top:458px;font-size:11.5px;color:#000;transform:translate(-50%,-50%) rotate(-90deg)">Selection ...</div>
<div class="t" style="left:951px;top:541px;font-size:11.5px;color:#000;transform:translate(-50%,-50%) rotate(-90deg)">Library Br...</div>
<div class="t" style="left:951px;top:610px;font-size:11.5px;color:#000;transform:translate(-50%,-50%) rotate(-90deg)">Vie...</div>
<div class="t" style="left:951px;top:674px;font-size:11.5px;color:#000;transform:translate(-50%,-50%) rotate(-90deg)">Comman...</div>
<div class="a" style="left:960px;top:336px;width:410px;height:19px;background:#dadbdc;border:1px solid #c6c7c8"></div>
<div class="t" style="left:965px;top:340px;font-size:11.6px;color:#000;">Property Editor</div>
<svg style="left:1332px;top:340px" width="12" height="12"><rect x="3" y="1" width="6" height="5.5" fill="none" stroke="#222" stroke-width="1.3"/><rect x="3" y="1" width="6" height="1.6" fill="#222"/><rect x="0.5" y="4.5" width="6" height="5.5" fill="#dadbdc" stroke="#222" stroke-width="1.3"/><rect x="0.5" y="4.5" width="6" height="1.6" fill="#222"/></svg>
<svg style="left:1353px;top:341px" width="10" height="10"><path d="M1 1L9 9M9 1L1 9" stroke="#222" stroke-width="1.8"/></svg>
<div class="a" style="left:960px;top:357px;width:410px;height:358px;background:#f0f0f0;border:1px solid #7d8590;border-bottom:1px solid #7d8590"></div>
<div class="a" style="left:959px;top:357px;width:1px;height:358px;background:#a0a0a0"></div>
<div class="t" style="left:970px;top:373px;font-size:10.8px;color:#000;">Selection:</div>
<div class="a" style="left:1023px;top:367px;width:337px;height:20px;background:#e1e1e1;border:1px solid #adadad"></div>
<div class="t" style="left:1026px;top:373px;font-size:11px;color:#000;">All (3)</div>
<svg style="left:1347px;top:375px" width="10" height="6"><path d="M0.5 0.5L5 5L9.5 0.5" fill="none" stroke="#333" stroke-width="1.2"/></svg>
<div class="a" style="left:970px;top:400px;width:390px;height:175px;border:1px solid #dcdcdc"></div>
<div class="a" style="left:976px;top:393px;width:94px;height:12px;background:#f0f0f0"></div>
<div class="t" style="left:978px;top:395px;font-size:10.8px;color:#000;">General Properties</div>
<div class="t" style="right:356px;top:420px;font-size:11px;color:#8a8a8a">Layer:</div>
<div class="t" style="right:356px;top:443px;font-size:11px;color:#000">Color:</div>
<div class="t" style="right:356px;top:466px;font-size:11px;color:#000">Lineweight:</div>
<div class="t" style="right:356px;top:489px;font-size:11px;color:#000">Linetype:</div>
<div class="t" style="right:356px;top:512px;font-size:11px;color:#8a8a8a">Linetype Scale:</div>
<div class="t" style="right:356px;top:534px;font-size:11px;color:#8a8a8a">Draw Order:</div>
<div class="t" style="right:356px;top:556px;font-size:11px;color:#000">Handle:</div>
<div class="a" style="left:1059px;top:414px;width:263px;height:20px;background:#cccccc;border:1px solid #c4c4c4"></div>
<svg style="left:1306px;top:422px" width="10" height="6"><path d="M0.5 0.5L5 5L9.5 0.5" fill="none" stroke="#aaa" stroke-width="1.2"/></svg>
<div class="a" style="left:1328px;top:414px;width:21px;height:20px;background:#cccccc;border:1px solid #c4c4c4"></div>
<svg style="left:1333px;top:419px" width="12" height="10"><path d="M0 1.5H11M0 5H11M0 8.5H11" stroke="#999" stroke-width="1.4"/></svg>
<div class="a" style="left:1059px;top:437px;width:291px;height:20px;background:#e1e1e1;border:1px solid #adadad"></div>
<svg style="left:1335px;top:445px" width="10" height="6"><path d="M0.5 0.5L5 5L9.5 0.5" fill="none" stroke="#333" stroke-width="1.2"/></svg>
<div class="a" style="left:1059px;top:460px;width:291px;height:20px;background:#e1e1e1;border:1px solid #adadad"></div>
<svg style="left:1335px;top:468px" width="10" height="6"><path d="M0.5 0.5L5 5L9.5 0.5" fill="none" stroke="#333" stroke-width="1.2"/></svg>
<div class="a" style="left:1059px;top:483px;width:291px;height:20px;background:#e1e1e1;border:1px solid #adadad"></div>
<svg style="left:1335px;top:491px" width="10" height="6"><path d="M0.5 0.5L5 5L9.5 0.5" fill="none" stroke="#333" stroke-width="1.2"/></svg>
<div class="a" style="left:1064px;top:441px;width:16px;height:11px;background:#fff;border:1px solid #000"></div>
<div class="t" style="left:1082px;top:443px;font-size:11px;color:#000;">By Layer</div>
<div class="a" style="left:1064px;top:470px;width:16px;height:1px;background:#000"></div>
<div class="t" style="left:1082px;top:466px;font-size:11px;color:#000;">By Layer</div>
<div class="t" style="left:1063px;top:489px;font-size:11px;color:#000;">By Layer</div>
<div class="a" style="left:1059px;top:506px;width:291px;height:20px;background:#f0f0f0;border:1px solid #dcdcdc"></div>
<div class="a" style="left:1059px;top:528px;width:291px;height:19px;background:#f0f0f0;border:1px solid #dcdcdc"></div>
<div class="a" style="left:1059px;top:549px;width:291px;height:20px;background:#fff;border:1px solid #7a7a7a"></div>
<div class="t" style="left:1062px;top:555px;font-size:11px;color:#8a8a8a;">*VARIES*</div>
<div class="a" style="left:970px;top:589px;width:390px;height:45px;border:1px solid #dcdcdc"></div>
<div class="a" style="left:976px;top:583px;width:94px;height:12px;background:#f0f0f0"></div>
<div class="t" style="left:978px;top:584px;font-size:10.8px;color:#000;">Specific Properties</div>
<div class="t" style="left:979px;top:610px;font-size:11px;color:#000;">Name:</div>
<div class="a" style="left:1017px;top:605px;width:333px;height:20px;background:#fff;border:1px solid #7a7a7a"></div>
<div class="t" style="left:1020px;top:611px;font-size:11px;color:#333;">*VARIES*</div>
<div class="a" style="left:970px;top:647px;width:390px;height:43px;border:1px solid #dcdcdc"></div>
<div class="a" style="left:976px;top:641px;width:45px;height:12px;background:#f0f0f0"></div>
<div class="t" style="left:978px;top:643px;font-size:10.8px;color:#000;">Custom</div>
<div class="a" style="left:1332px;top:665px;width:17px;height:16px;background:#e1e1e1;border:1px solid #adadad"></div>
<div class="a" style="left:1336px;top:672px;width:9px;height:2px;background:#e00000"></div>
<div class="a" style="left:1339.5px;top:668.5px;width:2px;height:9px;background:#e00000"></div>
<div class="a" style="left:1px;top:715px;width:1405px;height:45px;background:#f0f0f0"></div>
<div class="t" style="left:160px;top:732px;font-size:13px;color:#000;">Select entity or region</div>
<div class="t" style="left:622px;top:732px;font-size:12.7px;color:#000;">No entities selected.</div>
<svg style="left:0;top:0" width="1408" height="793">
<rect x="5" y="171.5" width="2" height="2" fill="#a8a8a8"/>
<rect x="9" y="171.5" width="2" height="2" fill="#a8a8a8"/>
<rect x="13" y="171.5" width="2" height="2" fill="#a8a8a8"/>
<rect x="17" y="171.5" width="2" height="2" fill="#a8a8a8"/>
<rect x="21" y="171.5" width="2" height="2" fill="#a8a8a8"/>
<rect x="25" y="171.5" width="2" height="2" fill="#a8a8a8"/>
<rect x="29" y="171.5" width="2" height="2" fill="#a8a8a8"/>
<rect x="33" y="171.5" width="2" height="2" fill="#a8a8a8"/>
<line x1="14" y1="194.1" x2="22.7" y2="194.1" stroke="#111" stroke-width="1.2" />
<line x1="18.35" y1="189.8" x2="18.35" y2="198.5" stroke="#111" stroke-width="1.2" />
<rect x="6.9" y="214.9" width="3" height="3" rx="0.8" fill="#ff0000"/>
<rect x="6.9" y="221.7" width="3" height="3" rx="0.8" fill="#ff0000"/>
<rect x="6.9" y="228.5" width="3" height="3" rx="0.8" fill="#ff0000"/>
<rect x="6.9" y="235.8" width="3" height="3" rx="0.8" fill="#ff0000"/>
<rect x="14.0" y="214.9" width="3" height="3" rx="0.8" fill="#ff0000"/>
<rect x="14.0" y="221.7" width="3" height="3" rx="0.8" fill="#ff0000"/>
<rect x="14.0" y="228.5" width="3" height="3" rx="0.8" fill="#ff0000"/>
<rect x="14.0" y="235.8" width="3" height="3" rx="0.8" fill="#ff0000"/>
<rect x="20.8" y="214.9" width="3" height="3" rx="0.8" fill="#ff0000"/>
<rect x="20.8" y="221.7" width="3" height="3" rx="0.8" fill="#ff0000"/>
<rect x="20.8" y="228.5" width="3" height="3" rx="0.8" fill="#ff0000"/>
<rect x="20.8" y="235.8" width="3" height="3" rx="0.8" fill="#ff0000"/>
<rect x="27.8" y="214.9" width="3" height="3" rx="0.8" fill="#ff0000"/>
<rect x="27.8" y="221.7" width="3" height="3" rx="0.8" fill="#ff0000"/>
<rect x="27.8" y="228.5" width="3" height="3" rx="0.8" fill="#ff0000"/>
<rect x="27.8" y="235.8" width="3" height="3" rx="0.8" fill="#ff0000"/>
<line x1="6" y1="246.5" x2="33" y2="246.5" stroke="#d0d0d0" stroke-width="1" />
<line x1="8.4" y1="265.3" x2="29.5" y2="276.6" stroke="#1a1a1a" stroke-width="1.3" />
<path d="M16.4 255 Q18 266 29.5 268" fill="none" stroke="#1a1a1a" stroke-width="1.3" stroke-linejoin="round" />
<circle cx="8.4" cy="265.3" r="1.9" fill="#ff0000"/>
<circle cx="29.5" cy="276.6" r="1.9" fill="#ff0000"/>
<circle cx="16.4" cy="255" r="1.9" fill="#ff0000"/>
<circle cx="29.5" cy="268" r="1.9" fill="#ff0000"/>
<polyline points="8.4,299.4 29.5,288" fill="none" stroke="#1a1a1a" stroke-width="1.2" stroke-linejoin="round" />
<path d="M17 309.4 Q19 298 29.5 296.9" fill="none" stroke="#1a1a1a" stroke-width="1.2" stroke-linejoin="round" />
<circle cx="8.4" cy="299.4" r="1.8" fill="#ff0000"/>
<circle cx="13.675" cy="296.54999999999995" r="1.8" fill="#ff0000"/>
<circle cx="18.950000000000003" cy="293.7" r="1.8" fill="#ff0000"/>
<circle cx="24.225" cy="290.84999999999997" r="1.8" fill="#ff0000"/>
<circle cx="29.5" cy="288.0" r="1.8" fill="#ff0000"/>
<circle cx="17" cy="309.4" r="1.8" fill="#ff0000"/>
<circle cx="18.5" cy="303" r="1.8" fill="#ff0000"/>
<circle cx="22" cy="299.5" r="1.8" fill="#ff0000"/>
<circle cx="26" cy="297.5" r="1.8" fill="#ff0000"/>
<circle cx="29.5" cy="296.9" r="1.8" fill="#ff0000"/>
<line x1="10.2" y1="322.5" x2="20.5" y2="333.5" stroke="#1a1a1a" stroke-width="1.2" />
<line x1="20.5" y1="333.5" x2="29.5" y2="329.8" stroke="#1a1a1a" stroke-width="1.2" />
<path d="M20.5 333.5 Q17 337 17 342" fill="none" stroke="#1a1a1a" stroke-width="1.2" stroke-linejoin="round" />
<path d="M16 328 Q20 323.5 24 330" fill="none" stroke="#333" stroke-width="0.9" stroke-linejoin="round" />
<circle cx="20.5" cy="333.5" r="1.9" fill="#ff0000"/>
<circle cx="23.9" cy="362.7" r="5.7" fill="none" stroke="#1a1a1a" stroke-width="1.2"/>
<line x1="9.1" y1="373.4" x2="16.4" y2="359.1" stroke="#1a1a1a" stroke-width="1.2" />
<circle cx="16.4" cy="359.1" r="1.9" fill="#ff0000"/>
<line x1="8" y1="398.4" x2="29.5" y2="387.5" stroke="#1a1a1a" stroke-width="1.2" />
<circle cx="18.6" cy="393.2" r="1.9" fill="#ff0000"/>
<path d="M16.4 408.2 Q17 397 29.5 395.5" fill="none" stroke="#1a1a1a" stroke-width="1.2" stroke-linejoin="round" />
<circle cx="28.9" cy="408" r="1.9" fill="#ff0000"/>
<circle cx="18.9" cy="430.9" r="9.3" fill="none" stroke="#1a1a1a" stroke-width="1.3"/>
<circle cx="18.9" cy="430.9" r="1.9" fill="#ff0000"/>
<circle cx="18.9" cy="421.6" r="1.9" fill="#ff0000"/>
<circle cx="18.9" cy="440.2" r="1.9" fill="#ff0000"/>
<circle cx="9.6" cy="430.9" r="1.9" fill="#ff0000"/>
<circle cx="28.2" cy="430.9" r="1.9" fill="#ff0000"/>
<line x1="6" y1="450.7" x2="33" y2="450.7" stroke="#d0d0d0" stroke-width="1" />
<line x1="8.6" y1="471.1" x2="29.5" y2="459.8" stroke="#1a1a1a" stroke-width="1.2" />
<path d="M17 481 Q17 469 29.5 467.7" fill="none" stroke="#1a1a1a" stroke-width="1.2" stroke-linejoin="round" />
<circle cx="19.3" cy="465" r="1.9" fill="#ff0000"/>
<circle cx="20.5" cy="471.1" r="1.9" fill="#ff0000"/>
<rect x="6.8" y="493.9" width="24.3" height="18.6" rx="0" fill="none" stroke="#333" stroke-width="1.2" />
<line x1="9" y1="511" x2="29" y2="495.5" stroke="#555" stroke-width="0.9" stroke-dasharray="2 2"/>
<circle cx="19.3" cy="503" r="1.9" fill="#ff0000"/>
<line x1="6" y1="522.3" x2="33" y2="522.3" stroke="#d0d0d0" stroke-width="1" />
<line x1="8.8" y1="541.4" x2="30.2" y2="531.3" stroke="#1a1a1a" stroke-width="1.2" />
<circle cx="16.4" cy="538.4" r="1.9" fill="#ff0000"/>
<path d="M17.6 551.4 Q18 540 29.7 538.9" fill="none" stroke="#1a1a1a" stroke-width="1.2" stroke-linejoin="round" />
<circle cx="20.1" cy="543.9" r="1.9" fill="#ff0000"/>
<polygon points="7,537 12,534.5 11,538" fill="#1a1a1a" stroke="#1a1a1a" stroke-width="0.6" stroke-linejoin="round" />
<polygon points="17,553 19.5,547.5 21,552" fill="#1a1a1a" stroke="#1a1a1a" stroke-width="0.6" stroke-linejoin="round" />
<text x="4.5" y="589.5" font-family="Liberation Sans" font-size="10" fill="#1a1a1a" >1</text>
<text x="25.5" y="579" font-family="Liberation Sans" font-size="10" fill="#1a1a1a" >2</text>
<line x1="8" y1="574" x2="13" y2="571.5" stroke="#1a1a1a" stroke-width="1.4" />
<line x1="9" y1="577" x2="14" y2="574.5" stroke="#1a1a1a" stroke-width="1.4" />
<circle cx="15.8" cy="571.6" r="1.9" fill="#ff0000"/>
<line x1="21" y1="569" x2="24" y2="567.5" stroke="#1a1a1a" stroke-width="1.2" />
<circle cx="28.5" cy="565.5" r="1.3" fill="#1a1a1a"/>
<line x1="6" y1="594.2" x2="33" y2="594.2" stroke="#d0d0d0" stroke-width="1" />
<line x1="9.6" y1="615" x2="24.4" y2="620" stroke="#1a1a1a" stroke-width="1.2" />
<line x1="24.4" y1="620" x2="28.4" y2="605.5" stroke="#1a1a1a" stroke-width="1.2" />
<circle cx="24.4" cy="620" r="1.9" fill="#ff0000"/>
<line x1="6" y1="632.7" x2="33" y2="632.7" stroke="#d0d0d0" stroke-width="1" />
<defs><linearGradient id="gauto" x1="0" y1="0" x2="0" y2="1"><stop offset="0" stop-color="#8c8c8c"/><stop offset="0.45" stop-color="#d8d8d8"/><stop offset="1" stop-color="#f4f4f4"/></linearGradient></defs>
<rect x="3.5" y="637.5" width="31.5" height="31.5" rx="0" fill="url(#gauto)" stroke="#8a8a8a" stroke-width="1" />
<text x="7.5" y="658" font-family="Liberation Sans" font-size="12" fill="#111" >Auto</text>
<line x1="6" y1="672.2" x2="33" y2="672.2" stroke="#d0d0d0" stroke-width="1" />
<polyline points="15.5,703.5 18.9,706.3 22.3,703.5" fill="none" stroke="#333" stroke-width="1.2" stroke-linejoin="round" />
<polyline points="15.5,708 18.9,710.8 22.3,708" fill="none" stroke="#333" stroke-width="1.2" stroke-linejoin="round" />
<rect x="1374.5" y="171.5" width="2" height="2" fill="#a8a8a8"/>
<rect x="1378.5" y="171.5" width="2" height="2" fill="#a8a8a8"/>
<rect x="1382.5" y="171.5" width="2" height="2" fill="#a8a8a8"/>
<rect x="1386.5" y="171.5" width="2" height="2" fill="#a8a8a8"/>
<rect x="1390.5" y="171.5" width="2" height="2" fill="#a8a8a8"/>
<rect x="1394.5" y="171.5" width="2" height="2" fill="#a8a8a8"/>
<rect x="1398.5" y="171.5" width="2" height="2" fill="#a8a8a8"/>
<rect x="1402.5" y="171.5" width="2" height="2" fill="#a8a8a8"/>
<text x="1387" y="187" font-family="Liberation Sans" font-size="11" fill="#111" >x,y</text>
<line x1="1376" y1="192.5" x2="1397.5" y2="192.5" stroke="#999" stroke-width="1.2" />
<line x1="1397.5" y1="192.5" x2="1397.5" y2="205.5" stroke="#aaa" stroke-width="1.6" />
<circle cx="1397.5" cy="192.5" r="1.9" fill="#ff0000"/>
<text x="1376" y="221.5" font-family="Liberation Sans" font-size="11" fill="#111" letter-spacing="-0.5">@x,y</text>
<line x1="1376" y1="226" x2="1397.5" y2="226" stroke="#999" stroke-width="1.2" />
<line x1="1397.5" y1="226" x2="1397.5" y2="238.5" stroke="#aaa" stroke-width="1.6" />
<circle cx="1397.5" cy="226" r="1.9" fill="#ff0000"/>
<line x1="1375" y1="246.4" x2="1402" y2="246.4" stroke="#d0d0d0" stroke-width="1" />
<line x1="1379.5" y1="261.5" x2="1395" y2="269.5" stroke="#1a1a1a" stroke-width="1.2" />
<polygon points="1379.5,261.5 1382.137196788679,265.11181299319077 1383.9717684677598,261.5573303649713" fill="#1a1a1a" stroke="#1a1a1a" stroke-width="0.5" stroke-linejoin="round" />
<polygon points="1395,269.5 1390.5282315322402,269.4426696350287 1392.362803211321,265.88818700680923" fill="#1a1a1a" stroke="#1a1a1a" stroke-width="0.5" stroke-linejoin="round" />
<circle cx="1378.2" cy="260.7" r="1.9" fill="#ff0000"/>
<circle cx="1396.4" cy="270.3" r="1.9" fill="#ff0000"/>
<line x1="1376.6" y1="304.4" x2="1384" y2="290.7" stroke="#ff0000" stroke-width="1.3" />
<line x1="1382" y1="298.7" x2="1397" y2="305.5" stroke="#1a1a1a" stroke-width="1.2" />
<polygon points="1382,298.7 1384.8173520101702,302.1731149780548 1386.4689031885462,298.5299873786966" fill="#1a1a1a" stroke="#1a1a1a" stroke-width="0.5" stroke-linejoin="round" />
<polygon points="1397,305.5 1392.5310968114538,305.6700126213034 1394.1826479898298,302.0268850219452" fill="#1a1a1a" stroke="#1a1a1a" stroke-width="0.5" stroke-linejoin="round" />
<circle cx="1398.2" cy="306.2" r="1.9" fill="#ff0000"/>
<path d="M1376.5 326 Q1383 330 1382.5 339" fill="none" stroke="#ff0000" stroke-width="1.3" stroke-linejoin="round" />
<line x1="1391.9" y1="322" x2="1399.8" y2="335" stroke="#ff0000" stroke-width="1.3" />
<line x1="1383" y1="335" x2="1395.5" y2="328.5" stroke="#1a1a1a" stroke-width="1.2" />
<polygon points="1383,335 1387.4715726782224,334.92902265590124 1385.6261617316545,331.3801554509629" fill="#1a1a1a" stroke="#1a1a1a" stroke-width="0.5" stroke-linejoin="round" />
<polygon points="1395.5,328.5 1392.8738382683455,332.1198445490371 1391.0284273217776,328.57097734409876" fill="#1a1a1a" stroke="#1a1a1a" stroke-width="0.5" stroke-linejoin="round" />
<line x1="1375" y1="351.3" x2="1402" y2="351.3" stroke="#d0d0d0" stroke-width="1" />
<polyline points="1379.3,372.2 1384.4,363.1" fill="none" stroke="#1a1a1a" stroke-width="1.2" stroke-linejoin="round" />
<line x1="1383" y1="378.2" x2="1395.7" y2="378.2" stroke="#444" stroke-width="1.4" />
<path d="M1386 364 Q1393 368 1394.5 376" fill="none" stroke="#ff0000" stroke-width="1.2" stroke-linejoin="round" />
<polygon points="1385,363 1389,363.5 1387,366.5" fill="#ff0000" stroke="#ff0000" stroke-width="0.5" stroke-linejoin="round" />
<polygon points="1395,377.5 1392.5,374 1396.5,374" fill="#ff0000" stroke="#ff0000" stroke-width="0.5" stroke-linejoin="round" />
<line x1="1375" y1="390.3" x2="1402" y2="390.3" stroke="#d0d0d0" stroke-width="1" />
<text x="1380" y="418" font-family="Liberation Serif" font-size="22" fill="#6a6a6a" >&#931;</text>
<line x1="1375" y1="428.8" x2="1402" y2="428.8" stroke="#d0d0d0" stroke-width="1" />
<polygon points="1378,455.7 1378,449.4 1385.6,441.4 1397.4,441.4 1397.4,455.7" fill="#ff0000" stroke="#300" stroke-width="1" stroke-linejoin="round" />
<path d="M1379.3 489.7 A 9.3 9.3 0 0 1 1397.7 474.6 Z" fill="#ff0000" stroke="#300" stroke-width="1" stroke-linejoin="round" />
<path d="M1378 522.9 V511 A 9.7 7 0 0 1 1397.4 511 V522.9 Z" fill="#ff0000" stroke="#300" stroke-width="1" stroke-linejoin="round" />
<line x1="1375" y1="533.7" x2="1402" y2="533.7" stroke="#d0d0d0" stroke-width="1" />
<path d="M954.9000000000001 201.425 Q962.2 192.0275 969.5 201.425 Q962.2 208.74875 954.9000000000001 201.425 Z" fill="#fff" stroke="#000" stroke-width="2.3100000000000005" stroke-linejoin="round" />
<circle cx="962.2" cy="201.215" r="3.3600000000000003" fill="#000" stroke="#000" stroke-width="0"/>
<circle cx="961.1500000000001" cy="200.06" r="1.05" fill="#fff" stroke="none" stroke-width="0"/>
<path d="M1001.0 201.425 Q1008.3 192.0275 1015.5999999999999 201.425 Q1008.3 208.74875 1001.0 201.425 Z" fill="#fff" stroke="#aaa" stroke-width="2.3100000000000005" stroke-linejoin="round" />
<circle cx="1008.3" cy="201.215" r="3.3600000000000003" fill="#aaa" stroke="#aaa" stroke-width="0"/>
<circle cx="1007.25" cy="200.06" r="1.05" fill="#fff" stroke="none" stroke-width="0"/>
<line x1="1050.5" y1="200.9" x2="1061.5" y2="200.9" stroke="#e00000" stroke-width="3" />
<line x1="1056" y1="195.4" x2="1056" y2="206.4" stroke="#e00000" stroke-width="3" />
<line x1="1096.5" y1="200.9" x2="1107.5" y2="200.9" stroke="#e00000" stroke-width="3" />
<line x1="1143.6" y1="206.4" x2="1155.1" y2="194.9" stroke="#8a5a10" stroke-width="3.6" stroke-linecap="butt"/>
<line x1="1143.6" y1="206.4" x2="1155.1" y2="194.9" stroke="#f0b040" stroke-width="2.2" stroke-linecap="butt"/>
<line x1="1153.1" y1="196.9" x2="1155.8999999999999" y2="194.1" stroke="#e02020" stroke-width="3.6" stroke-linecap="butt"/>
<polygon points="1142.1,207.9 1142.8999999999999,204.6 1145.3999999999999,207.1" fill="#e8c890" stroke="#6a4a20" stroke-width="0.5" stroke-linejoin="round" />
<path d="M1069 228.1 V221.6 A4 4 0 0 1 1077 221.6 V228.1" fill="none" stroke="#000" stroke-width="3.4" stroke-linejoin="round" />
<rect x="1067.3" y="227.9" width="3.4" height="2.6" rx="0" fill="#fff" stroke="#9a9a9a" stroke-width="0.6" />
<rect x="1075.3" y="227.9" width="3.4" height="2.6" rx="0" fill="#fff" stroke="#9a9a9a" stroke-width="0.6" />
<rect x="1091.1" y="217.6" width="7" height="4.5" rx="0" fill="#f6f6f6" stroke="#bdbdbd" stroke-width="1" />
<rect x="1088.6" y="221.6" width="12" height="6.5" rx="1" fill="#e6e6e6" stroke="#bdbdbd" stroke-width="1" />
<line x1="1090.6" y1="225.1" x2="1098.6" y2="225.1" stroke="#c8c8c8" stroke-width="1" />
<path d="M1109.6 224.1 Q1116.6 215.15 1123.6 224.1 Q1116.6 231.075 1109.6 224.1 Z" fill="#fff" stroke="#000" stroke-width="2.2" stroke-linejoin="round" />
<circle cx="1116.6" cy="223.9" r="3.2" fill="#000" stroke="#000" stroke-width="0"/>
<circle cx="1115.6" cy="222.79999999999998" r="1.0" fill="#fff" stroke="none" stroke-width="0"/>
<line x1="1143.4" y1="223.6" x2="1145.9" y2="223.6" stroke="#f2c890" stroke-width="1" />
<line x1="1142.0819805153396" y1="226.78198051533946" x2="1143.8497474683058" y2="228.54974746830584" stroke="#f2c890" stroke-width="1" />
<line x1="1138.9" y1="228.1" x2="1138.9" y2="230.6" stroke="#f2c890" stroke-width="1" />
<line x1="1135.7180194846605" y1="226.78198051533946" x2="1133.9502525316943" y2="228.54974746830584" stroke="#f2c890" stroke-width="1" />
<line x1="1134.4" y1="223.6" x2="1131.9" y2="223.6" stroke="#f2c890" stroke-width="1" />
<line x1="1135.7180194846605" y1="220.41801948466053" x2="1133.9502525316943" y2="218.65025253169415" stroke="#f2c890" stroke-width="1" />
<line x1="1138.9" y1="219.1" x2="1138.9" y2="216.6" stroke="#f2c890" stroke-width="1" />
<line x1="1142.0819805153396" y1="220.41801948466053" x2="1143.8497474683058" y2="218.65025253169415" stroke="#f2c890" stroke-width="1" />
<circle cx="1138.9" cy="223.6" r="3.6" fill="#e8d000" stroke="none" stroke-width="0"/>
<path d="M1157.3 222.6 V220.1 A3.2 3.2 0 0 1 1163.7 220.1 V222.6" fill="none" stroke="#c8c8c8" stroke-width="1.6" stroke-linejoin="round" />
<rect x="1155.5" y="222.1" width="10" height="8" rx="1" fill="#c8c8c8" stroke="none" stroke-width="0" />
<path d="M1069 248.1 V241.6 A4 4 0 0 1 1077 241.6 V248.1" fill="none" stroke="#000" stroke-width="3.4" stroke-linejoin="round" />
<rect x="1067.3" y="247.9" width="3.4" height="2.6" rx="0" fill="#fff" stroke="#9a9a9a" stroke-width="0.6" />
<rect x="1075.3" y="247.9" width="3.4" height="2.6" rx="0" fill="#fff" stroke="#9a9a9a" stroke-width="0.6" />
<rect x="1091.1" y="237.6" width="7" height="4.5" rx="0" fill="#f6f6f6" stroke="#bdbdbd" stroke-width="1" />
<rect x="1088.6" y="241.6" width="12" height="6.5" rx="1" fill="#e6e6e6" stroke="#bdbdbd" stroke-width="1" />
<line x1="1090.6" y1="245.1" x2="1098.6" y2="245.1" stroke="#c8c8c8" stroke-width="1" />
<path d="M1109.6 244.1 Q1116.6 235.15 1123.6 244.1 Q1116.6 251.075 1109.6 244.1 Z" fill="#fff" stroke="#000" stroke-width="2.2" stroke-linejoin="round" />
<circle cx="1116.6" cy="243.9" r="3.2" fill="#000" stroke="#000" stroke-width="0"/>
<circle cx="1115.6" cy="242.79999999999998" r="1.0" fill="#fff" stroke="none" stroke-width="0"/>
<line x1="1143.4" y1="243.6" x2="1145.9" y2="243.6" stroke="#f2c890" stroke-width="1" />
<line x1="1142.0819805153396" y1="246.78198051533946" x2="1143.8497474683058" y2="248.54974746830584" stroke="#f2c890" stroke-width="1" />
<line x1="1138.9" y1="248.1" x2="1138.9" y2="250.6" stroke="#f2c890" stroke-width="1" />
<line x1="1135.7180194846605" y1="246.78198051533946" x2="1133.9502525316943" y2="248.54974746830584" stroke="#f2c890" stroke-width="1" />
<line x1="1134.4" y1="243.6" x2="1131.9" y2="243.6" stroke="#f2c890" stroke-width="1" />
<line x1="1135.7180194846605" y1="240.41801948466053" x2="1133.9502525316943" y2="238.65025253169415" stroke="#f2c890" stroke-width="1" />
<line x1="1138.9" y1="239.1" x2="1138.9" y2="236.6" stroke="#f2c890" stroke-width="1" />
<line x1="1142.0819805153396" y1="240.41801948466053" x2="1143.8497474683058" y2="238.65025253169415" stroke="#f2c890" stroke-width="1" />
<circle cx="1138.9" cy="243.6" r="3.6" fill="#e8d000" stroke="none" stroke-width="0"/>
<path d="M1157.3 242.6 V240.1 A3.2 3.2 0 0 1 1163.7 240.1 V242.6" fill="none" stroke="#c8c8c8" stroke-width="1.6" stroke-linejoin="round" />
<rect x="1155.5" y="242.1" width="10" height="8" rx="1" fill="#c8c8c8" stroke="none" stroke-width="0" />
<path d="M1069 268.0 V261.5 A4 4 0 0 1 1077 261.5 V268.0" fill="none" stroke="#000" stroke-width="3.4" stroke-linejoin="round" />
<rect x="1067.3" y="267.8" width="3.4" height="2.6" rx="0" fill="#fff" stroke="#9a9a9a" stroke-width="0.6" />
<rect x="1075.3" y="267.8" width="3.4" height="2.6" rx="0" fill="#fff" stroke="#9a9a9a" stroke-width="0.6" />
<rect x="1091.1" y="257.5" width="7" height="4.5" rx="0" fill="#f6f6f6" stroke="#bdbdbd" stroke-width="1" />
<rect x="1088.6" y="261.5" width="12" height="6.5" rx="1" fill="#e6e6e6" stroke="#bdbdbd" stroke-width="1" />
<line x1="1090.6" y1="265.0" x2="1098.6" y2="265.0" stroke="#c8c8c8" stroke-width="1" />
<path d="M1109.6 264.0 Q1116.6 255.05 1123.6 264.0 Q1116.6 270.975 1109.6 264.0 Z" fill="#fff" stroke="#000" stroke-width="2.2" stroke-linejoin="round" />
<circle cx="1116.6" cy="263.8" r="3.2" fill="#000" stroke="#000" stroke-width="0"/>
<circle cx="1115.6" cy="262.7" r="1.0" fill="#fff" stroke="none" stroke-width="0"/>
<line x1="1143.4" y1="263.5" x2="1145.9" y2="263.5" stroke="#f2c890" stroke-width="1" />
<line x1="1142.0819805153396" y1="266.6819805153395" x2="1143.8497474683058" y2="268.4497474683058" stroke="#f2c890" stroke-width="1" />
<line x1="1138.9" y1="268.0" x2="1138.9" y2="270.5" stroke="#f2c890" stroke-width="1" />
<line x1="1135.7180194846605" y1="266.6819805153395" x2="1133.9502525316943" y2="268.4497474683058" stroke="#f2c890" stroke-width="1" />
<line x1="1134.4" y1="263.5" x2="1131.9" y2="263.5" stroke="#f2c890" stroke-width="1" />
<line x1="1135.7180194846605" y1="260.3180194846605" x2="1133.9502525316943" y2="258.5502525316942" stroke="#f2c890" stroke-width="1" />
<line x1="1138.9" y1="259.0" x2="1138.9" y2="256.5" stroke="#f2c890" stroke-width="1" />
<line x1="1142.0819805153396" y1="260.3180194846605" x2="1143.8497474683058" y2="258.5502525316942" stroke="#f2c890" stroke-width="1" />
<circle cx="1138.9" cy="263.5" r="3.6" fill="#e8d000" stroke="none" stroke-width="0"/>
<path d="M1157.3 262.5 V260.0 A3.2 3.2 0 0 1 1163.7 260.0 V262.5" fill="none" stroke="#ff0000" stroke-width="1.6" stroke-linejoin="round" />
<rect x="1155.5" y="262.0" width="10" height="8" rx="1" fill="#ff0000" stroke="none" stroke-width="0" />
<path d="M1069 288.0 V281.5 A4 4 0 0 1 1077 281.5 V288.0" fill="none" stroke="#0a0a30" stroke-width="3.4" stroke-linejoin="round" />
<rect x="1067.3" y="287.8" width="3.4" height="2.6" rx="0" fill="#9fd6f0" stroke="#9a9a9a" stroke-width="0.6" />
<rect x="1075.3" y="287.8" width="3.4" height="2.6" rx="0" fill="#9fd6f0" stroke="#9a9a9a" stroke-width="0.6" />
<rect x="1089" y="278" width="11" height="10" rx="0" fill="#a8d0f0" stroke="#5a9ad0" stroke-width="1" />
<line x1="1089" y1="288" x2="1100" y2="278" stroke="#a03020" stroke-width="1.2" />
<path d="M1109.6 284.0 Q1116.6 275.05 1123.6 284.0 Q1116.6 290.975 1109.6 284.0 Z" fill="#fff" stroke="#0a1a50" stroke-width="2.2" stroke-linejoin="round" />
<circle cx="1116.6" cy="283.8" r="3.2" fill="#0a1a50" stroke="#0a1a50" stroke-width="0"/>
<circle cx="1115.6" cy="282.7" r="1.0" fill="#fff" stroke="none" stroke-width="0"/>
<line x1="1143.4" y1="283.5" x2="1145.9" y2="283.5" stroke="#c8c8c8" stroke-width="1" />
<line x1="1142.0819805153396" y1="286.6819805153395" x2="1143.8497474683058" y2="288.4497474683058" stroke="#c8c8c8" stroke-width="1" />
<line x1="1138.9" y1="288.0" x2="1138.9" y2="290.5" stroke="#c8c8c8" stroke-width="1" />
<line x1="1135.7180194846605" y1="286.6819805153395" x2="1133.9502525316943" y2="288.4497474683058" stroke="#c8c8c8" stroke-width="1" />
<line x1="1134.4" y1="283.5" x2="1131.9" y2="283.5" stroke="#c8c8c8" stroke-width="1" />
<line x1="1135.7180194846605" y1="280.3180194846605" x2="1133.9502525316943" y2="278.5502525316942" stroke="#c8c8c8" stroke-width="1" />
<line x1="1138.9" y1="279.0" x2="1138.9" y2="276.5" stroke="#c8c8c8" stroke-width="1" />
<line x1="1142.0819805153396" y1="280.3180194846605" x2="1143.8497474683058" y2="278.5502525316942" stroke="#c8c8c8" stroke-width="1" />
<circle cx="1138.9" cy="283.5" r="3.6" fill="#b0a020" stroke="none" stroke-width="0"/>
<path d="M1157.3 282.5 V280.0 A3.2 3.2 0 0 1 1163.7 280.0 V282.5" fill="none" stroke="#90b0c8" stroke-width="1.6" stroke-linejoin="round" />
<rect x="1155.5" y="282.0" width="10" height="8" rx="1" fill="#90b0c8" stroke="none" stroke-width="0" />
<line x1="1046.55" y1="288.45" x2="1056.9" y2="278.1" stroke="#666" stroke-width="3.24" stroke-linecap="butt"/>
<line x1="1046.55" y1="288.45" x2="1056.9" y2="278.1" stroke="#a8a8a8" stroke-width="1.9800000000000002" stroke-linecap="butt"/>
<polygon points="1045.2,289.8 1045.92,286.83 1048.17,289.08" fill="#e8c890" stroke="#6a4a20" stroke-width="0.5" stroke-linejoin="round" />
<path d="M1182.6 201.375 Q1189.3 192.8725 1196.0 201.375 Q1189.3 208.00125 1182.6 201.375 Z" fill="#fff" stroke="#000" stroke-width="2.09" stroke-linejoin="round" />
<circle cx="1189.3" cy="201.185" r="3.04" fill="#000" stroke="#000" stroke-width="0"/>
<circle cx="1188.35" cy="200.14000000000001" r="0.95" fill="#fff" stroke="none" stroke-width="0"/>
<path d="M1206.0 201.375 Q1212.7 192.8725 1219.4 201.375 Q1212.7 208.00125 1206.0 201.375 Z" fill="#fff" stroke="#aaa" stroke-width="2.09" stroke-linejoin="round" />
<circle cx="1212.7" cy="201.185" r="3.04" fill="#aaa" stroke="#aaa" stroke-width="0"/>
<circle cx="1211.75" cy="200.14000000000001" r="0.95" fill="#fff" stroke="none" stroke-width="0"/>
<line x1="1232" y1="200.9" x2="1242" y2="200.9" stroke="#e00000" stroke-width="3" />
<line x1="1237" y1="195.9" x2="1237" y2="205.9" stroke="#e00000" stroke-width="3" />
<line x1="1256" y1="200.9" x2="1266" y2="200.9" stroke="#9a9a9a" stroke-width="3" />
<text x="1278.5" y="205" font-family="Liberation Sans" font-size="11" fill="#9a9a9a" >a|b</text>
<line x1="1305.325" y1="205.575" x2="1315.1" y2="195.8" stroke="#8a5a10" stroke-width="3.06" stroke-linecap="butt"/>
<line x1="1305.325" y1="205.575" x2="1315.1" y2="195.8" stroke="#f0b040" stroke-width="1.87" stroke-linecap="butt"/>
<line x1="1313.3999999999999" y1="197.5" x2="1315.78" y2="195.12" stroke="#e02020" stroke-width="3.06" stroke-linecap="butt"/>
<polygon points="1304.05,206.85 1304.73,204.045 1306.855,206.17" fill="#e8c890" stroke="#6a4a20" stroke-width="0.5" stroke-linejoin="round" />
<rect x="1329" y="195" width="10" height="12" rx="0" fill="#f4f4f4" stroke="none" stroke-width="0" />
<path d="M1331 197 Q1336 196 1335 201 V205" fill="none" stroke="#9a9a9a" stroke-width="1.8" stroke-linejoin="round" />
<polygon points="1332.5,203 1337.5,203 1335,207" fill="#9a9a9a" stroke="#9a9a9a" stroke-width="0.5" stroke-linejoin="round" />
<rect x="1352.5" y="196.5" width="10" height="10" rx="0" fill="#f0a080" stroke="#f05050" stroke-width="1.5" />
<line x1="1355" y1="199" x2="1360" y2="204" stroke="#fff" stroke-width="1.3" />
<line x1="1360" y1="199" x2="1355" y2="204" stroke="#fff" stroke-width="1.3" />
<path d="M1181.6 223.6 Q1188.6 214.65 1195.6 223.6 Q1188.6 230.575 1181.6 223.6 Z" fill="#fff" stroke="#000" stroke-width="2.2" stroke-linejoin="round" />
<circle cx="1188.6" cy="223.4" r="3.2" fill="#000" stroke="#000" stroke-width="0"/>
<circle cx="1187.6" cy="222.29999999999998" r="1.0" fill="#fff" stroke="none" stroke-width="0"/>
<line x1="1205.85" y1="228.05" x2="1216.2" y2="217.7" stroke="#8a5a10" stroke-width="3.24" stroke-linecap="butt"/>
<line x1="1205.85" y1="228.05" x2="1216.2" y2="217.7" stroke="#f0b040" stroke-width="1.9800000000000002" stroke-linecap="butt"/>
<line x1="1214.4" y1="219.5" x2="1216.92" y2="216.98" stroke="#e02020" stroke-width="3.24" stroke-linecap="butt"/>
<polygon points="1204.5,229.4 1205.22,226.43 1207.47,228.68" fill="#e8c890" stroke="#6a4a20" stroke-width="0.5" stroke-linejoin="round" />
<path d="M1181.6 244.0 Q1188.6 235.05 1195.6 244.0 Q1188.6 250.975 1181.6 244.0 Z" fill="#fff" stroke="#000" stroke-width="2.2" stroke-linejoin="round" />
<circle cx="1188.6" cy="243.8" r="3.2" fill="#000" stroke="#000" stroke-width="0"/>
<circle cx="1187.6" cy="242.7" r="1.0" fill="#fff" stroke="none" stroke-width="0"/>
<rect x="907.5" y="173.5" width="13" height="13" rx="2" fill="#f06a55" stroke="#e84030" stroke-width="1.5" />
<line x1="910.5" y1="176.5" x2="917.5" y2="183.5" stroke="#fff" stroke-width="2" />
<line x1="917.5" y1="176.5" x2="910.5" y2="183.5" stroke="#fff" stroke-width="2" />
<circle cx="58" cy="179.5" r="5.6" fill="none" stroke="#8a9ab0" stroke-width="1"/>
<circle cx="58" cy="179.5" r="4.8" fill="#f8f8f8" stroke="#252575" stroke-width="1.7"/>
<line x1="55" y1="177.5" x2="58" y2="179.5" stroke="#bbb" stroke-width="0.8" />
<line x1="57" y1="175.5" x2="58" y2="179.5" stroke="#bbb" stroke-width="0.8" />
<line x1="58" y1="179.5" x2="62.5" y2="184" stroke="#e8c000" stroke-width="1.8" />
<circle cx="62.8" cy="184.3" r="1.2" fill="#e06060" stroke="none" stroke-width="0"/>
<circle cx="50" cy="701.3" r="4.8" fill="none" stroke="#b84840" stroke-width="1.2"/>
<line x1="44" y1="701.3" x2="56" y2="701.3" stroke="#b84840" stroke-width="1.1" />
<line x1="50" y1="695.3" x2="50" y2="707.3" stroke="#b84840" stroke-width="1.1" />
<line x1="62.3" y1="706" x2="62.3" y2="714.5" stroke="#c00000" stroke-width="2" />
<polygon points="620.2,483.9 620.2,498 623.6,494.8 626.3,500 628,499 625.5,493.8 630,493.5" fill="#fff" stroke="#fff" stroke-width="0.6" stroke-linejoin="round" />
<rect x="300.5" y="722.5" width="17" height="29" rx="8.5" ry="9" fill="#fbfbfb" stroke="#666" stroke-width="1"/>
<path d="M300.5 735.8 Q309 733.5 317.5 735.8" fill="none" stroke="#555" stroke-width="1.2" stroke-linejoin="round" />
<line x1="309" y1="722.5" x2="309" y2="735" stroke="#555" stroke-width="1.2" />
<rect x="307.3" y="724.8" width="3.5" height="6.5" rx="1.5" fill="#fff" stroke="#555" stroke-width="1" />
<line x1="1388.7" y1="717" x2="1388.7" y2="758" stroke="#d6d6d6" stroke-width="1" />
<rect x="1403" y="750" width="2" height="2" fill="#a8a8a8"/>
<rect x="1400" y="753" width="2" height="2" fill="#a8a8a8"/>
<rect x="1403" y="753" width="2" height="2" fill="#a8a8a8"/>
<rect x="1397" y="756" width="2" height="2" fill="#a8a8a8"/>
<rect x="1400" y="756" width="2" height="2" fill="#a8a8a8"/>
<rect x="1403" y="756" width="2" height="2" fill="#a8a8a8"/>
</svg>
<div class="a" style="left:1017px;top:615px;width:325px;height:139px;background:rgba(16,16,246,0.93);border-radius:7px"></div>
<div class="t" style="left:1025px;top:733px;font-size:12.2px;color:#fff;font-family:'Liberation Mono',monospace;font-weight:bold;text-decoration:underline">QCAD Pro 3.25.2.9 Mouse / Keyboard events</div>
</body></html>
